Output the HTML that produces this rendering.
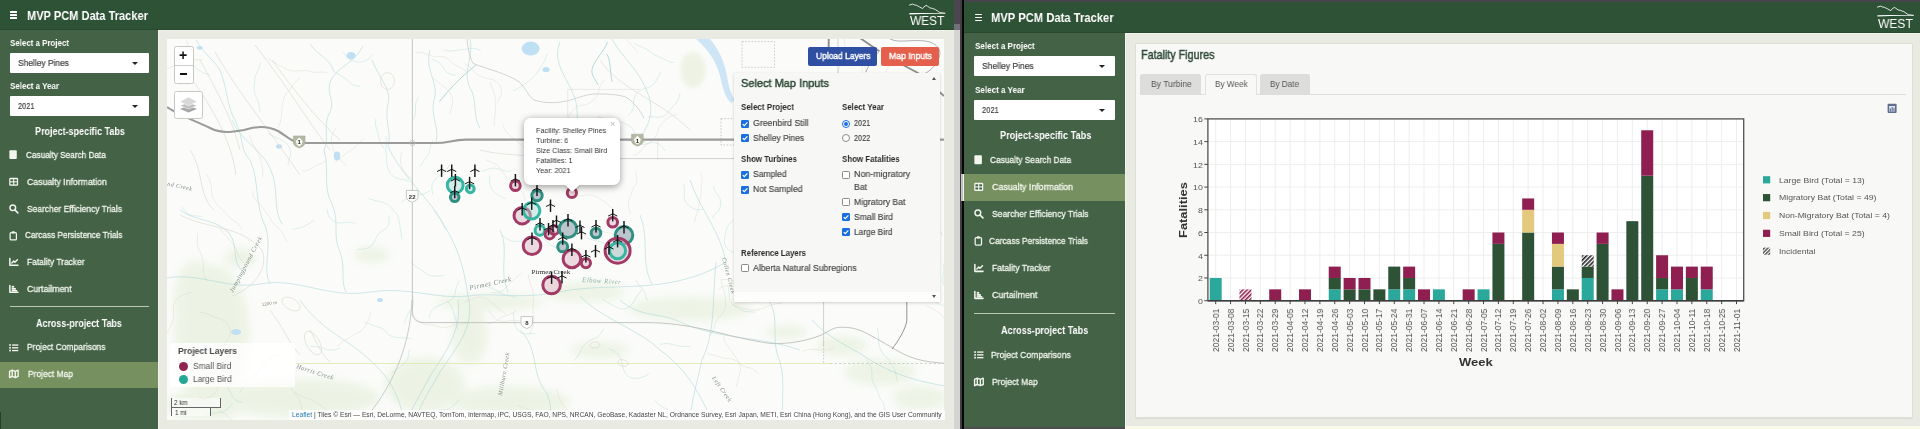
<!DOCTYPE html>
    <html><head><meta charset="utf-8"><title>MVP PCM Data Tracker</title>
    <style>
    html,body{margin:0;padding:0}
    html{overflow:hidden;width:1920px;height:429px}
    body{width:1920px;height:429px;position:relative;overflow:hidden;background:#e9eae1;font-family:"Liberation Sans",sans-serif}
    .t{position:absolute;white-space:nowrap;line-height:1;display:block;transform-origin:0 50%;will-change:transform}
    .b{position:absolute;box-sizing:border-box}
    svg{position:absolute;overflow:visible;will-change:transform}
    </style></head><body>
    <div class="b" style="left:0px;top:0px;width:954px;height:429px;background:#e9eae1;"></div>
<div class="b" style="left:0px;top:30px;width:158px;height:399px;background:#446246;"></div>
<div class="b" style="left:0px;top:0px;width:954px;height:30px;background:#2e5235;"></div>
<div class="b" style="left:0px;top:412px;width:1.2px;height:17px;background:#23402a;"></div>
<div class="b" style="left:158px;top:30px;width:796px;height:1px;background:#f1f3ec;"></div>
<div class="b" style="left:158px;top:30px;width:1px;height:399px;background:#f1f3ec;"></div>
<div class="b" style="left:0px;top:28.6px;width:954px;height:1.4px;background:#29492f;"></div>
<div class="b" style="left:10.0px;top:11.2px;width:7.4px;height:1.5px;background:#fff;border-radius:.5px;"></div>
<div class="b" style="left:10.0px;top:14.1px;width:7.4px;height:1.5px;background:#fff;border-radius:.5px;"></div>
<div class="b" style="left:10.0px;top:17.0px;width:7.4px;height:1.5px;background:#fff;border-radius:.5px;"></div>
<span class="t" style="left:26.50px;top:9px;font-size:13.4px;color:#fff;transform:scaleX(0.8261);font-weight:700;">MVP PCM Data Tracker</span>
<span class="t" style="left:10.00px;top:38px;font-size:9.8px;color:#fff;transform:scaleX(0.8083);font-weight:700;">Select a Project</span>
<div class="b" style="left:10.0px;top:53.0px;width:139.0px;height:20.0px;background:#fff;border-radius:1px;"></div>
<span class="t" style="left:17.60px;top:59px;font-size:9.2px;color:#3c3c3c;transform:scaleX(0.9149);-webkit-text-stroke:0.2px #3c3c3c;">Shelley Pines</span>
<span class="t" style="left:10.00px;top:81px;font-size:9.8px;color:#fff;transform:scaleX(0.8125);font-weight:700;">Select a Year</span>
<div class="b" style="left:10.0px;top:96.0px;width:139.0px;height:20.0px;background:#fff;border-radius:1px;"></div>
<span class="t" style="left:17.60px;top:102px;font-size:9.2px;color:#3c3c3c;transform:scaleX(0.8062);-webkit-text-stroke:0.2px #3c3c3c;">2021</span>
<div class="b" style="left:132.30px;top:61.80px;width:0;height:0;border-left:3.00px solid transparent;border-right:3.00px solid transparent;border-top:3.20px solid #222"></div>
<div class="b" style="left:132.30px;top:104.80px;width:0;height:0;border-left:3.00px solid transparent;border-right:3.00px solid transparent;border-top:3.20px solid #222"></div>
<span class="t" style="left:34.70px;top:126px;font-size:10.7px;color:#fff;transform:scaleX(0.8424);font-weight:700;">Project-specific Tabs</span>
<div class="b" style="left:0px;top:361.6px;width:158px;height:26.8px;background:#76915f;"></div>
<span class="t" style="left:25.70px;top:150px;font-size:9.4px;color:#f2f6ee;transform:scaleX(0.8749);-webkit-text-stroke:0.3px #f2f6ee;">Casualty Search Data</span>
<svg style="left:9.10px;top:150.35px" width="9.50" height="9.50" viewBox="0 0 10 10"><rect x="0.4" y="0.3" width="7.8" height="9.2" rx="1" fill="#f2f6ee"/></svg>
<span class="t" style="left:26.80px;top:177px;font-size:9.4px;color:#f2f6ee;transform:scaleX(0.9280);-webkit-text-stroke:0.3px #f2f6ee;">Casualty Information</span>
<svg style="left:9.10px;top:177.25px" width="9.50" height="9.50" viewBox="0 0 10 10"><rect x="0.2" y="0.9" width="9.4" height="8.4" rx="1.3" fill="#f2f6ee"/><rect x="1.5" y="2.4" width="2.8" height="2.1" fill="#446246"/><rect x="5.5" y="2.4" width="2.8" height="2.1" fill="#446246"/><rect x="1.5" y="5.7" width="2.8" height="2.1" fill="#446246"/><rect x="5.5" y="5.7" width="2.8" height="2.1" fill="#446246"/></svg>
<span class="t" style="left:26.80px;top:204px;font-size:9.4px;color:#f2f6ee;transform:scaleX(0.8991);-webkit-text-stroke:0.3px #f2f6ee;">Searcher Efficiency Trials</span>
<svg style="left:9.10px;top:203.85px" width="9.50" height="9.50" viewBox="0 0 10 10"><circle cx="4" cy="4" r="3" fill="none" stroke="#f2f6ee" stroke-width="1.5"/><path d="M6.2 6.2 L9.3 9.3" stroke="#f2f6ee" stroke-width="1.7" stroke-linecap="round"/></svg>
<span class="t" style="left:24.60px;top:230px;font-size:9.4px;color:#f2f6ee;transform:scaleX(0.8771);-webkit-text-stroke:0.3px #f2f6ee;">Carcass Persistence Trials</span>
<svg style="left:9.10px;top:230.55px" width="9.50" height="9.50" viewBox="0 0 10 10"><rect x="1.2" y="1.8" width="6.6" height="7.6" rx="1" fill="none" stroke="#f2f6ee" stroke-width="1.3"/><rect x="3" y="0.3" width="3" height="2.2" rx=".6" fill="#f2f6ee"/></svg>
<span class="t" style="left:26.80px;top:257px;font-size:9.4px;color:#f2f6ee;transform:scaleX(0.8980);-webkit-text-stroke:0.3px #f2f6ee;">Fatality Tracker</span>
<svg style="left:9.10px;top:257.15px" width="9.50" height="9.50" viewBox="0 0 10 10"><path d="M0.9 1.6 V8.7 H9.4" fill="none" stroke="#f2f6ee" stroke-width="1.6" stroke-linecap="round" stroke-linejoin="round"/><path d="M3 6.2 L4.9 4.2 L6.2 5.4 L8.8 2.8" fill="none" stroke="#f2f6ee" stroke-width="1.5" stroke-linecap="round" stroke-linejoin="round"/></svg>
<span class="t" style="left:26.80px;top:284px;font-size:9.4px;color:#f2f6ee;transform:scaleX(0.9321);-webkit-text-stroke:0.3px #f2f6ee;">Curtailment</span>
<svg style="left:9.10px;top:283.85px" width="9.50" height="9.50" viewBox="0 0 10 10"><path d="M0.9 1.6 V8.7 H9.4" fill="none" stroke="#f2f6ee" stroke-width="1.6" stroke-linecap="round" stroke-linejoin="round"/><rect x="2.8" y="2" width="2.6" height="1.9" fill="#f2f6ee"/><rect x="2.8" y="4.2" width="4.4" height="1.9" fill="#f2f6ee"/><rect x="2.8" y="6.3" width="5.8" height="1.6" fill="#f2f6ee"/></svg>
<span class="t" style="left:26.70px;top:342px;font-size:9.4px;color:#f2f6ee;transform:scaleX(0.9020);-webkit-text-stroke:0.3px #f2f6ee;">Project Comparisons</span>
<svg style="left:9.10px;top:342.55px" width="9.50" height="9.50" viewBox="0 0 10 10"><rect x="0.2" y="1.3" width="1.8" height="1.7" fill="#f2f6ee"/><rect x="3.2" y="1.45" width="6.6" height="1.4" fill="#f2f6ee"/><rect x="0.2" y="4.2" width="1.8" height="1.7" fill="#f2f6ee"/><rect x="3.2" y="4.3500000000000005" width="6.6" height="1.4" fill="#f2f6ee"/><rect x="0.2" y="7.1" width="1.8" height="1.7" fill="#f2f6ee"/><rect x="3.2" y="7.25" width="6.6" height="1.4" fill="#f2f6ee"/></svg>
<span class="t" style="left:27.70px;top:369px;font-size:9.4px;color:#f2f6ee;transform:scaleX(0.9012);-webkit-text-stroke:0.3px #f2f6ee;">Project Map</span>
<svg style="left:9.10px;top:369.45px" width="9.50" height="9.50" viewBox="0 0 10 10"><path d="M0.6 2.4 L3.4 1.2 L6.6 2.4 L9.6 1.2 V7.8 L6.6 9 L3.4 7.8 L0.6 9 Z M3.4 1.2 V7.8 M6.6 2.4 V9" fill="none" stroke="#f2f6ee" stroke-width="1.45" stroke-linejoin="round"/></svg>
<div class="b" style="left:10.0px;top:305.8px;width:139.0px;height:1px;background:#b9c8b0;"></div>
<span class="t" style="left:36.40px;top:318px;font-size:10.7px;color:#fff;transform:scaleX(0.8376);font-weight:700;">Across-project Tabs</span>
<svg style="left:908.6px;top:3.0px" width="37.00" height="23.00" viewBox="0 0 37 23"><path d="M0.5 2.1 L3.3 1.1 L5.4 1.9 L7.5 2.3 L10.7 4 L13.6 5.6 L14.6 4.2 L17 2.4 L18.6 3.2 L20.7 4.8 L23.4 5.4 L26.5 6.6 L30.7 9.5 L36 10.2" fill="none" stroke="#fff" stroke-width="0.85" stroke-linejoin="round" stroke-linecap="round"/><path d="M0.4 10.1 L13 9.9 L36 10 L36 10.5 L13 10.9 L0.4 11.4 Z" fill="#fff"/></svg>
<span class="t" style="left:909.70px;top:15px;font-size:12.3px;color:#fff;transform:scaleX(0.9653);">WEST</span>
<svg style="left:167px;top:39px;overflow:hidden" width="777" height="381" viewBox="167 39 777 381"><defs><filter id="bl" x="-20%" y="-20%" width="140%" height="140%"><feGaussianBlur stdDeviation="5"/></filter><filter id="bl2" x="-20%" y="-20%" width="140%" height="140%"><feGaussianBlur stdDeviation="2"/></filter><symbol id="tb" viewBox="-5 -5 10 14" overflow="visible"><path d="M0 -4.8 V7.6" stroke="#161616" stroke-width="1.45"/><path d="M0 0 L-4.2 2.1 M0 0 L4.2 2.1" stroke="#161616" stroke-width="1.0" stroke-linecap="round"/></symbol></defs><rect x="167" y="39" width="777" height="381" fill="#fbfcfa"/><g filter="url(#bl)" fill="#dfead0" opacity=".5"><ellipse cx="212" cy="335" rx="38" ry="70"/><ellipse cx="196" cy="300" rx="22" ry="40"/><ellipse cx="240" cy="258" rx="16" ry="10"/><ellipse cx="300" cy="398" rx="80" ry="20"/><ellipse cx="205" cy="405" rx="40" ry="16"/><ellipse cx="425" cy="385" rx="40" ry="28"/><ellipse cx="470" cy="335" rx="18" ry="30"/><ellipse cx="510" cy="402" rx="60" ry="16"/><ellipse cx="842" cy="346" rx="26" ry="10"/><ellipse cx="880" cy="372" rx="36" ry="13"/><ellipse cx="920" cy="398" rx="28" ry="12"/><ellipse cx="690" cy="309" rx="62" ry="12"/><ellipse cx="490" cy="302" rx="55" ry="8"/><ellipse cx="585" cy="292" rx="40" ry="10"/><ellipse cx="786" cy="332" rx="22" ry="7"/><ellipse cx="372" cy="255" rx="18" ry="8"/><ellipse cx="600" cy="350" rx="30" ry="8"/></g><path d="M695 38 L709 38 C718 48 724 60 727 76 C729 88 731 94 735 100 L731 103 C726 98 723 90 721 80 C718 64 709 50 695 38 Z" fill="#cde5f4"/><ellipse cx="693" cy="70" rx="13" ry="18" fill="#e4edd8" opacity=".6" filter="url(#bl2)"/><path d="M467 39 C468 50 470 58 473 63.4 C490 70 508 74 518.8 81.7 C526 88 528 96 534 100 C546 104 560 103 570.7 100 C580 97 588 94 595 94 C606 94 616 94 625.7 97 C634 102 640 110 644 118.4" fill="none" stroke="#c6cac6" stroke-width=".8"/><path d="M607.4 42 C604 52 594 60 592 69.5 C591 76 596 80 598 84.8 M607 54 C611 62 610 72 612 81.7 M476 65 C462 76 450 88 439.5 101.6" fill="none" stroke="#9fd0d2" stroke-width=".8"/><path d="M567.7 117 V89.4 H640 M657.7 139.6 V159.6" fill="none" stroke="#e2e2e0" stroke-width=".7"/><path d="M296 363.5 H830" stroke="#e3ebb8" stroke-width="1.1"/><path d="M830 363.5 H945" stroke="#c9cfc0" stroke-width=".9" stroke-dasharray="2.5 2"/><path d="M196 40 C205 55 214 60 220 70 C228 90 226 105 236 122 C244 140 240 150 250 160" fill="none" stroke="#a9d6da" stroke-width="0.75" opacity=".75"/><path d="M363 46 C355 62 340 66 332 78 C324 92 336 100 330 112 C322 126 330 138 324 150" fill="none" stroke="#a9d6da" stroke-width="0.75" opacity=".75"/><path d="M310 44 C318 56 330 58 334 72" fill="none" stroke="#a9d6da" stroke-width="0.75" opacity=".75"/><path d="M372 60 C380 80 392 90 388 104 C384 120 392 132 388 146" fill="none" stroke="#a9d6da" stroke-width="0.75" opacity=".75"/><path d="M470 39 C474 58 462 70 470 88 C478 100 472 116 480 128" fill="none" stroke="#a9d6da" stroke-width="0.75" opacity=".75"/><path d="M430 50 C424 70 440 84 434 100 C430 116 440 128 436 142" fill="none" stroke="#a9d6da" stroke-width="0.75" opacity=".75"/><path d="M560 42 C552 62 566 76 574 96 C580 110 574 122 582 138" fill="none" stroke="#a9d6da" stroke-width="0.75" opacity=".75"/><path d="M612 39 C622 58 640 70 648 94 C654 110 650 124 640 138" fill="none" stroke="#a9d6da" stroke-width="0.75" opacity=".75"/><path d="M324 150 C330 170 322 186 332 204 C340 222 332 236 340 252 C346 268 340 280 346 292" fill="none" stroke="#a9d6da" stroke-width="0.75" opacity=".75"/><path d="M250 160 C260 182 254 204 266 228 C272 250 262 268 270 284" fill="none" stroke="#a9d6da" stroke-width="0.75" opacity=".75"/><path d="M167 278 C198 272 228 290 260 284 C298 277 328 299 370 292 C408 286 438 300 468 296 C498 292 518 300 558 292 C598 284 640 290 678 281 C700 276 716 268 726 262" fill="none" stroke="#a9d6da" stroke-width="0.75" opacity=".75"/><path d="M388 146 C398 170 420 190 436 212 C448 232 462 250 468 296" fill="none" stroke="#a9d6da" stroke-width="0.75" opacity=".75"/><path d="M468 296 C476 326 456 348 440 372 C428 394 420 404 416 420" fill="none" stroke="#a9d6da" stroke-width="0.75" opacity=".75"/><path d="M458 300 C462 330 446 352 430 376 C420 396 412 406 408 420" fill="none" stroke="#a9d6da" stroke-width="0.75" opacity=".75"/><path d="M580 296 C600 318 640 330 660 350 C690 372 700 396 712 420" fill="none" stroke="#a9d6da" stroke-width="0.75" opacity=".75"/><path d="M716 262 C712 300 716 330 702 360 C696 386 692 400 690 420" fill="none" stroke="#a9d6da" stroke-width="0.75" opacity=".75"/><path d="M690 180 C700 210 720 230 726 262" fill="none" stroke="#a9d6da" stroke-width="0.75" opacity=".75"/><path d="M812 320 C830 340 850 346 870 360 C890 372 910 380 945 386" fill="none" stroke="#a9d6da" stroke-width="0.75" opacity=".75"/><path d="M180 210 C196 222 214 218 228 232 C240 246 230 262 244 272" fill="none" stroke="#a9d6da" stroke-width="0.75" opacity=".75"/><path d="M500 230 C510 250 498 270 508 292" fill="none" stroke="#a9d6da" stroke-width="0.75" opacity=".75"/><path d="M640 215 C650 240 640 262 652 284" fill="none" stroke="#a9d6da" stroke-width="0.75" opacity=".75"/><path d="M300 300 C320 330 350 340 372 362 C392 380 400 400 404 420" fill="none" stroke="#a9d6da" stroke-width="0.75" opacity=".75"/><path d="M620 300 C640 318 660 312 680 322 C720 340 760 336 800 350" fill="none" stroke="#a9d6da" stroke-width="0.75" opacity=".75"/><path d="M770 302 C780 320 770 340 780 362 C786 384 780 400 784 420" fill="none" stroke="#a9d6da" stroke-width="0.75" opacity=".75"/><path d="M520 330 C540 350 530 372 546 392 C552 404 550 412 552 420" fill="none" stroke="#a9d6da" stroke-width="0.75" opacity=".75"/><path d="M232 120 C240 140 262 150 270 168 C280 190 272 208 282 224" fill="none" stroke="#a9d6da" stroke-width="0.75" opacity=".75"/><path d="M418.6 96.5 Q415.2 102.6 415.4 106.1 Q415.6 109.6 415.4 113.1 Q415.2 116.6 413.1 119.4 M333.8 71.7 Q339.8 75.4 343.0 76.9 Q346.1 78.4 348.3 81.1 Q350.5 83.9 353.7 85.1 Q357.0 86.4 360.5 86.3 M654.5 400.1 Q659.2 405.3 662.3 406.8 Q665.5 408.3 668.5 410.1 Q671.5 411.8 675.0 411.9 Q678.5 411.9 682.0 411.6 Q685.5 411.3 689.0 411.1 Q692.5 411.0 696.0 411.2 M602.3 298.8 Q608.0 302.9 611.2 304.4 Q614.3 305.9 617.4 307.6 Q620.4 309.3 623.9 309.0 Q627.4 308.6 630.0 306.3 Q632.7 304.0 634.2 300.8 Q635.7 297.7 637.9 295.0 Q640.1 292.3 642.1 289.4 M411.1 262.1 Q415.7 267.3 419.0 268.7 Q422.2 270.0 424.7 272.5 Q427.1 275.0 430.6 275.7 Q434.0 276.4 437.5 276.1 Q441.0 275.9 444.5 275.6 M433.9 210.0 Q437.6 215.9 439.8 218.6 Q442.0 221.4 443.1 224.7 Q444.2 228.0 446.8 230.4 M546.9 53.9 Q545.5 60.8 543.2 63.4 Q540.9 66.0 539.3 69.2 Q537.7 72.3 535.4 74.9 Q533.0 77.4 530.3 79.7 Q527.6 82.0 524.7 83.9 Q521.8 85.8 519.0 87.9 Q516.2 90.1 512.8 90.7 M901.0 219.6 Q898.2 226.0 897.7 229.5 Q897.2 233.0 896.3 236.3 Q895.4 239.7 893.7 242.8 M513.3 312.0 Q513.9 319.0 514.4 322.5 Q514.9 325.9 516.9 328.8 Q518.8 331.7 522.0 333.1 Q525.2 334.6 528.7 333.9 Q532.1 333.3 535.5 333.9 M267.5 133.3 Q273.7 136.5 277.0 137.9 Q280.2 139.3 283.3 140.9 Q286.4 142.4 288.3 145.4 Q290.1 148.4 290.6 151.8 Q291.0 155.3 289.6 158.5 Q288.3 161.8 288.0 165.3 M489.7 175.7 Q489.1 182.7 490.3 185.9 Q491.6 189.2 494.0 191.8 Q496.3 194.4 499.5 195.9 Q502.6 197.4 505.8 198.9 M624.7 139.1 Q631.5 140.9 634.7 142.3 Q637.9 143.7 641.4 144.2 Q644.8 144.8 648.1 143.5 Q651.4 142.3 654.8 142.7 Q658.3 143.2 660.8 145.6 Q663.4 148.1 665.3 151.0 M741.8 213.0 Q736.1 217.0 733.5 219.4 Q731.0 221.8 728.8 224.5 Q726.6 227.3 726.2 230.8 Q725.8 234.2 724.8 237.6 Q723.7 240.9 724.8 244.3 Q725.9 247.6 728.7 249.7 Q731.4 251.9 734.8 252.7 Q738.2 253.6 741.6 252.8 M431.2 59.0 Q438.0 60.8 440.2 63.5 Q442.5 66.2 444.2 69.2 Q446.0 72.2 449.2 73.7 Q452.3 75.2 455.8 75.3 M459.3 280.7 Q455.7 286.7 455.7 290.2 Q455.6 293.7 454.0 296.8 Q452.3 299.8 449.0 301.1 Q445.8 302.4 442.6 303.9 Q439.4 305.3 436.2 306.9 Q433.1 308.4 431.3 311.4 Q429.5 314.4 429.5 317.9 M433.2 139.9 Q430.0 146.1 429.8 149.6 Q429.6 153.1 427.3 155.8 Q425.1 158.5 423.4 161.5 Q421.7 164.6 419.3 167.1 M877.3 327.9 Q878.7 334.7 878.5 338.2 Q878.2 341.7 879.2 345.1 Q880.1 348.4 881.6 351.6 Q883.2 354.7 885.9 356.9 Q888.7 359.0 890.5 362.0 Q892.3 365.0 894.0 368.1 Q895.6 371.2 896.0 374.6 Q896.3 378.1 897.5 381.4 M340.3 348.2 Q333.7 350.6 330.2 350.2 Q326.8 349.9 323.6 348.4 Q320.4 346.9 316.9 346.7 Q313.4 346.5 309.9 346.3 M443.3 50.0 Q450.1 51.6 453.5 50.9 Q457.0 50.2 460.4 49.9 Q463.9 49.7 467.3 48.8 Q470.7 47.8 474.1 48.4 Q477.6 48.9 480.7 50.5 M438.6 410.3 Q445.6 410.3 448.8 408.8 Q451.9 407.3 454.3 404.7 Q456.6 402.1 459.3 399.9 M866.5 359.2 Q870.1 365.2 871.3 368.5 Q872.4 371.8 871.9 375.3 Q871.5 378.8 872.8 382.0 Q874.2 385.2 876.0 388.2 Q877.9 391.2 878.7 394.6 Q879.6 398.0 881.8 400.7 Q884.0 403.4 884.5 406.9 Q885.0 410.3 885.7 413.8 M661.0 72.1 Q657.3 78.0 655.9 81.1 Q654.4 84.3 651.4 86.1 Q648.3 87.8 644.9 88.5 Q641.5 89.2 638.7 91.4 Q636.0 93.5 634.7 96.8 Q633.3 100.0 633.7 103.5 Q634.1 107.0 632.5 110.1 Q631.0 113.3 628.2 115.5 M280.6 353.9 Q273.7 355.1 270.9 357.2 Q268.1 359.4 265.2 361.3 Q262.3 363.2 261.2 366.6 Q260.1 369.9 257.8 372.5 Q255.4 375.1 252.4 376.8 Q249.4 378.6 247.7 381.7 Q246.1 384.7 243.4 387.1 Q240.8 389.4 239.7 392.7 M933.5 113.2 Q932.1 120.1 932.4 123.6 Q932.7 127.0 934.2 130.2 Q935.8 133.4 936.9 136.7 M368.5 198.6 Q375.2 200.6 378.7 201.4 Q382.1 202.2 385.4 203.3 Q388.7 204.5 390.8 207.3 Q393.0 210.0 395.4 212.5 Q397.9 215.0 398.5 218.5 Q399.2 221.9 399.8 225.3 Q400.5 228.8 401.0 232.3 Q401.5 235.7 401.9 239.2 M181.5 206.7 Q185.4 212.5 188.5 214.2 Q191.5 215.9 195.0 215.9 Q198.5 215.9 202.0 216.4 M260.5 62.5 Q259.1 69.4 257.1 72.3 Q255.1 75.1 254.9 78.6 Q254.7 82.1 254.2 85.6 Q253.7 89.1 254.5 92.5 Q255.2 95.9 257.0 98.9 Q258.7 102.0 259.2 105.4 Q259.7 108.9 260.2 112.3 M603.5 328.6 Q600.8 335.0 597.7 336.8 Q594.7 338.5 591.4 339.7 Q588.2 341.0 585.7 343.5 Q583.2 345.9 581.6 349.1 Q580.0 352.2 578.4 355.3 Q576.8 358.4 574.0 360.5 M561.5 133.4 Q559.0 139.9 556.2 142.0 Q553.4 144.1 551.7 147.2 Q550.0 150.2 548.5 153.4 Q547.1 156.6 546.0 159.9 Q544.9 163.2 544.3 166.7 M412.5 294.7 Q413.8 301.6 413.1 305.0 Q412.4 308.4 410.0 311.0 Q407.6 313.5 406.6 316.9 Q405.7 320.2 403.7 323.2 M680.0 93.5 Q678.8 100.4 676.2 102.8 Q673.7 105.2 671.5 107.9 Q669.3 110.7 667.2 113.4 Q665.1 116.2 661.7 117.0 Q658.3 117.8 654.9 117.0 Q651.5 116.2 648.1 117.1 M502.3 235.4 Q507.4 240.2 510.9 240.8 Q514.3 241.4 517.8 241.4 Q521.3 241.3 524.7 240.5 Q528.1 239.6 531.5 238.6 M713.3 185.4 Q714.8 192.3 717.4 194.6 Q720.0 197.0 720.5 200.5 Q721.0 203.9 720.1 207.3 Q719.2 210.7 716.4 212.8 Q713.7 215.0 712.4 218.2 M373.3 54.1 Q368.8 59.4 365.6 60.9 Q362.4 62.3 359.0 62.1 Q355.5 61.8 352.1 60.7 Q348.8 59.7 346.7 56.8 Q344.7 54.0 342.2 51.5 M583.9 235.1 Q589.2 239.7 592.7 240.0 Q596.2 240.4 599.5 241.6 Q602.8 242.8 606.1 243.7 Q609.5 244.6 612.8 243.4 Q616.1 242.2 619.5 243.1 M660.0 344.4 Q666.8 342.9 670.1 343.9 Q673.5 344.8 676.9 345.6 Q680.3 346.4 683.8 346.4 Q687.3 346.3 690.8 346.6 M887.0 141.1 Q892.0 146.0 892.6 149.4 Q893.3 152.9 891.7 156.0 Q890.0 159.1 889.5 162.5 Q889.0 166.0 890.1 169.3 Q891.1 172.7 890.1 176.0 Q889.0 179.4 887.4 182.5 Q885.8 185.6 884.0 188.6 M327.0 208.8 Q327.7 215.8 330.2 218.3 Q332.6 220.7 335.8 222.2 Q339.0 223.7 342.4 222.9 Q345.8 222.1 349.3 222.4 Q352.7 222.7 356.2 223.3 M314.2 219.9 Q308.7 224.2 305.5 225.7 Q302.4 227.3 299.0 228.1 Q295.6 228.9 292.1 229.5 M857.5 408.7 Q857.7 415.7 858.5 419.1 Q859.3 422.5 858.5 425.9 Q857.7 429.3 856.0 432.4 Q854.3 435.4 852.0 438.1 M481.5 171.4 Q488.0 168.9 491.4 168.3 Q494.9 167.7 498.2 168.9 Q501.5 170.0 504.9 170.9 Q508.2 171.8 511.5 170.5 M683.9 184.1 Q684.7 191.1 684.2 194.5 Q683.7 198.0 685.3 201.1 Q686.9 204.2 689.7 206.3 Q692.5 208.4 695.9 209.5 Q699.2 210.6 702.4 209.3 M449.9 164.3 Q447.0 170.7 443.9 172.3 Q440.8 173.9 438.2 176.3 Q435.6 178.7 433.6 181.5 Q431.5 184.3 431.8 187.8 Q432.1 191.3 432.9 194.7 M535.8 230.6 Q539.4 236.6 542.6 238.1 Q545.7 239.6 547.9 242.4 Q550.0 245.1 553.3 246.5 Q556.5 247.9 559.5 249.6 Q562.6 251.3 565.8 252.6 Q569.1 253.9 572.6 254.2 Q576.0 254.6 579.4 255.5 M232.6 403.9 Q228.0 409.1 225.0 410.9 Q222.0 412.7 218.5 412.7 Q215.0 412.8 211.5 413.4 Q208.1 413.9 204.9 415.3 M932.1 95.9 Q934.0 102.7 933.4 106.1 Q932.8 109.6 931.2 112.7 Q929.5 115.8 927.9 118.8 Q926.2 121.9 924.8 125.1 Q923.5 128.4 921.3 131.1 Q919.1 133.8 916.8 136.5 Q914.6 139.2 911.3 140.3 Q907.9 141.3 904.4 141.2 M608.7 348.7 Q615.3 351.1 617.4 353.9 Q619.6 356.6 621.0 359.8 Q622.4 363.0 622.9 366.5 Q623.4 370.0 625.1 373.0 Q626.9 376.1 630.1 377.4 Q633.3 378.8 636.8 378.3 Q640.3 377.9 643.6 376.8 Q646.9 375.8 649.2 373.1 M816.4 251.8 Q816.1 258.8 817.1 262.1 Q818.1 265.5 820.2 268.3 Q822.3 271.1 824.5 273.8 Q826.8 276.5 830.1 277.4 Q833.5 278.4 835.7 281.1 Q838.0 283.8 838.4 287.3 Q838.9 290.7 841.2 293.4 Q843.4 296.1 845.6 298.8 M746.4 219.5 Q746.2 226.5 744.8 229.8 Q743.5 233.0 743.4 236.5 Q743.3 240.0 742.5 243.4 Q741.7 246.8 741.1 250.3 Q740.5 253.7 738.4 256.5 M226.6 385.9 Q230.4 391.8 231.7 395.0 Q233.0 398.3 235.9 400.3 Q238.8 402.3 242.2 402.6 M364.3 322.2 Q370.9 324.6 374.2 325.7 Q377.5 326.9 380.8 328.0 Q384.2 329.0 386.1 331.9 Q388.1 334.8 391.3 336.2 Q394.5 337.6 398.0 337.7 Q401.5 337.8 405.0 337.8 Q408.5 337.8 411.8 338.8 M388.9 216.5 Q389.6 223.5 387.7 226.4 Q385.8 229.4 382.6 230.7 Q379.4 232.1 377.7 235.1 Q376.0 238.2 374.5 241.4 Q373.0 244.5 370.3 246.7 Q367.6 248.9 364.1 249.0 Q360.6 249.1 357.1 249.4 M375.7 118.9 Q375.0 125.9 376.5 129.0 Q378.1 132.2 378.5 135.7 Q378.8 139.1 380.4 142.3 Q381.9 145.4 384.0 148.2 M635.8 279.7 Q639.0 285.9 641.6 288.2 Q644.2 290.5 645.2 293.9 Q646.2 297.2 647.3 300.6 M186.3 40.4 Q189.2 46.8 189.5 50.2 Q189.9 53.7 190.6 57.1 Q191.4 60.5 192.8 63.8 Q194.1 67.0 196.9 69.1 Q199.7 71.2 202.9 72.6 Q206.1 74.0 209.6 74.6 M429.8 190.7 Q424.0 194.5 420.5 194.6 Q417.0 194.6 413.6 195.7 Q410.3 196.8 407.2 198.4 Q404.1 200.0 401.3 202.1 M943.1 263.5 Q944.6 270.3 943.6 273.7 Q942.7 277.0 942.8 280.5 Q942.9 284.0 945.0 286.8 Q947.2 289.6 948.6 292.8 Q950.1 295.9 950.9 299.3 Q951.8 302.7 954.1 305.3 M921.5 205.2 Q923.4 211.9 924.7 215.2 Q926.0 218.4 929.0 220.2 Q932.0 222.0 934.2 224.7 Q936.4 227.5 938.9 229.9 Q941.5 232.3 942.4 235.7 M597.6 116.5 Q604.4 118.3 607.6 119.7 Q610.8 121.1 614.3 120.7 Q617.7 120.4 620.9 121.9 Q624.1 123.3 627.3 124.7 Q630.5 126.1 632.5 129.0 Q634.4 131.9 636.2 134.9 Q637.9 138.0 640.8 139.9 Q643.7 141.9 646.9 143.4 M385.9 136.4 Q386.5 143.4 386.0 146.9 Q385.5 150.3 386.0 153.8 Q386.5 157.3 386.7 160.8 Q386.9 164.3 387.7 167.7 Q388.4 171.1 390.6 173.8 Q392.8 176.6 396.0 178.0 Q399.2 179.4 402.7 179.5 Q406.2 179.5 409.1 181.5 M553.2 122.8 Q549.7 128.9 547.8 131.8 Q545.9 134.7 545.1 138.1 Q544.3 141.5 545.0 145.0 Q545.8 148.4 546.3 151.8 Q546.9 155.3 548.2 158.5 Q549.6 161.7 551.5 164.7 M795.9 116.0 Q802.8 116.6 806.0 118.0 Q809.2 119.5 812.7 119.5 Q816.2 119.6 819.6 118.5 Q822.9 117.5 826.4 117.7 Q829.9 117.8 833.4 118.0 Q836.9 118.2 840.4 118.7 M446.8 300.7 Q451.7 305.6 452.5 309.1 Q453.3 312.5 454.6 315.7 Q455.9 319.0 456.5 322.4 Q457.1 325.9 458.1 329.2 M409.4 349.3 Q408.7 356.2 407.4 359.5 Q406.0 362.7 403.2 364.7 Q400.3 366.7 397.5 368.9 Q394.8 371.0 391.7 372.8 M167.1 188.2 Q160.7 190.9 157.3 190.0 Q153.9 189.2 150.4 189.5 Q147.0 189.8 144.2 191.9 Q141.4 194.0 139.9 197.2 Q138.4 200.3 136.8 203.5 Q135.2 206.6 132.8 209.2 Q130.5 211.8 127.1 212.6 M727.8 285.6 Q729.7 292.4 729.2 295.9 Q728.8 299.3 730.7 302.3 Q732.7 305.2 735.8 306.8 Q738.9 308.3 741.9 310.2 Q744.8 312.1 748.3 311.8 Q751.8 311.5 755.2 312.3 M914.8 277.7 Q914.3 284.7 915.9 287.8 Q917.5 290.9 920.6 292.6 Q923.7 294.2 926.7 296.0 Q929.7 297.8 932.5 299.9 Q935.3 302.0 938.4 303.6 Q941.5 305.3 945.0 305.6 M634.0 43.0 Q640.0 46.7 643.3 47.7 Q646.7 48.7 649.2 51.1 Q651.7 53.6 654.9 55.0 Q658.1 56.4 661.3 57.9 Q664.4 59.4 667.5 61.1 Q670.5 62.9 674.0 62.3 M487.0 286.5 Q493.6 288.7 496.6 290.6 Q499.5 292.5 502.7 294.0 Q505.8 295.5 509.3 295.9 Q512.8 296.3 516.1 297.5 M885.8 125.4 Q891.7 129.2 894.9 130.6 Q898.2 131.9 901.6 132.7 Q905.0 133.6 908.1 132.1 Q911.3 130.5 913.9 128.2 Q916.5 125.8 919.8 124.9" fill="none" stroke="#a8d8d6" stroke-width=".7" opacity=".55"/><path d="M219.4 227.9 Q222.7 232.9 225.0 234.8 Q227.2 236.8 228.9 239.3 Q230.6 241.7 232.8 243.8 Q234.9 245.9 236.0 248.7 Q237.0 251.5 238.1 254.3 Q239.1 257.2 241.0 259.5 Q242.8 261.9 245.3 263.6 M491.0 292.5 Q497.0 293.1 499.8 292.0 Q502.6 291.0 504.7 288.8 Q506.7 286.6 509.0 284.6 Q511.2 282.6 513.2 280.4 Q515.3 278.2 517.8 276.5 Q520.2 274.8 522.1 272.5 M516.4 310.3 Q511.7 314.0 508.8 314.7 Q505.8 315.4 503.1 316.6 Q500.3 317.8 498.1 319.8 Q495.8 321.8 493.0 322.7 Q490.1 323.5 487.1 323.6 M191.8 292.1 Q186.0 293.8 183.2 294.8 Q180.3 295.8 178.1 297.8 Q175.9 299.8 174.6 302.5 Q173.4 305.2 173.4 308.2 Q173.4 311.2 173.6 314.2 Q173.9 317.2 173.0 320.1 Q172.0 322.9 171.0 325.7 Q169.9 328.5 168.1 331.0 Q166.4 333.4 164.9 336.0 M764.3 156.6 Q763.6 150.7 763.2 147.7 Q762.8 144.7 762.0 141.8 Q761.2 138.9 761.6 136.0 Q762.1 133.0 761.6 130.0 Q761.2 127.1 760.3 124.2 M864.0 50.5 Q860.8 55.7 860.6 58.6 Q860.3 61.6 861.4 64.4 Q862.4 67.3 862.2 70.3 Q862.0 73.2 862.5 76.2 Q863.0 79.2 862.8 82.1 Q862.6 85.1 861.3 87.8 Q859.9 90.5 859.0 93.3 Q858.1 96.2 857.8 99.2 Q857.6 102.2 856.0 104.8 Q854.5 107.3 852.7 109.7 M370.7 312.0 Q369.4 317.9 368.2 320.6 Q366.9 323.3 365.4 325.9 Q363.9 328.5 361.6 330.5 Q359.4 332.5 356.5 333.4 Q353.7 334.2 351.4 336.2 Q349.1 338.2 346.4 339.4 Q343.6 340.5 341.5 342.6 Q339.4 344.8 336.9 346.4 M528.9 334.8 Q532.1 329.7 532.7 326.8 Q533.2 323.8 533.8 320.9 Q534.4 317.9 533.5 315.1 Q532.6 312.2 533.0 309.2 Q533.4 306.3 533.2 303.3 Q533.0 300.3 533.4 297.3 Q533.8 294.3 533.1 291.4 Q532.4 288.5 531.0 285.8 Q529.6 283.2 529.3 280.2 Q528.9 277.2 528.4 274.2 M776.0 266.0 Q770.4 264.0 767.4 263.8 Q764.4 263.6 761.6 264.7 Q758.8 265.7 756.7 267.9 Q754.7 270.2 752.6 272.3 Q750.4 274.4 748.7 276.8 Q746.9 279.2 744.3 280.6 Q741.6 281.9 738.6 282.2 Q735.6 282.5 732.8 281.3 Q730.1 280.1 727.1 279.6 Q724.2 279.1 721.3 279.9 M241.9 228.9 Q238.6 223.9 236.2 222.2 Q233.7 220.4 231.2 218.8 Q228.7 217.1 227.1 214.6 Q225.4 212.1 223.1 210.2 Q220.8 208.2 218.6 206.2 Q216.4 204.2 214.8 201.6 Q213.3 199.0 212.4 196.2 Q211.6 193.3 211.5 190.3 Q211.5 187.3 210.9 184.4 Q210.2 181.4 208.9 178.7 Q207.7 176.0 205.8 173.6 M364.4 138.2 Q359.6 141.8 357.9 144.3 Q356.3 146.8 353.8 148.4 Q351.3 150.1 348.7 151.6 Q346.1 153.1 343.8 155.0 Q341.5 157.0 339.4 159.1 Q337.3 161.3 334.4 162.2 M561.2 127.2 Q565.7 123.2 567.0 120.5 Q568.4 117.8 569.6 115.1 Q570.9 112.4 572.9 110.2 Q575.0 108.0 577.7 106.6 Q580.3 105.2 583.3 105.1 Q586.3 104.9 588.9 103.4 Q591.5 101.9 593.7 99.9 Q596.0 97.9 597.3 95.2 Q598.6 92.5 599.1 89.5 Q599.5 86.6 601.3 84.1 Q603.0 81.7 605.0 79.4 M889.7 180.8 Q894.2 176.8 896.9 175.4 Q899.5 174.1 902.4 173.2 Q905.3 172.3 907.4 170.2 Q909.5 168.0 911.8 166.2 Q914.2 164.3 916.9 163.1 Q919.6 161.8 922.1 160.1 Q924.6 158.4 926.0 155.8 Q927.5 153.1 928.5 150.3 Q929.6 147.5 929.3 144.5 Q928.9 141.5 930.1 138.8 Q931.2 136.0 931.0 133.0 M735.9 387.2 Q737.8 381.5 738.3 378.6 Q738.9 375.6 739.8 372.8 Q740.7 369.9 740.4 366.9 Q740.0 363.9 738.4 361.4 Q736.7 358.9 735.0 356.4 Q733.4 353.9 731.7 351.5 Q729.9 349.0 728.0 346.7 Q726.1 344.4 724.9 341.6 Q723.8 338.9 723.0 336.0 M287.1 242.5 Q284.7 237.0 283.2 234.3 Q281.8 231.7 279.8 229.5 Q277.8 227.2 275.4 225.4 Q273.0 223.6 271.7 220.9 Q270.4 218.2 268.5 215.8 Q266.7 213.4 265.1 210.9 Q263.4 208.4 261.4 206.2 Q259.4 203.9 257.3 201.8 Q255.1 199.8 253.8 197.1 Q252.5 194.4 252.7 191.4 M449.7 114.1 Q451.4 108.4 452.1 105.5 Q452.8 102.6 452.5 99.6 Q452.2 96.6 450.8 94.0 Q449.4 91.3 447.0 89.5 Q444.6 87.6 442.4 85.6 Q440.2 83.5 437.8 81.8 Q435.3 80.1 433.4 77.8 M268.0 58.7 Q273.3 61.5 275.8 63.2 Q278.2 64.9 280.9 66.3 Q283.6 67.7 286.2 69.0 Q288.9 70.4 291.9 70.8 Q294.8 71.2 297.8 70.9 Q300.8 70.7 303.8 70.5 Q306.8 70.3 309.6 71.3 Q312.4 72.4 315.4 72.3 Q318.4 72.1 321.4 72.0 Q324.4 71.9 327.3 72.7 M918.3 114.2 Q920.0 119.9 921.0 122.8 Q921.9 125.6 924.0 127.8 Q926.1 130.0 927.0 132.8 Q928.0 135.6 929.3 138.3 M869.6 275.4 Q873.0 270.4 875.5 268.7 Q877.9 267.0 880.6 265.6 Q883.2 264.2 886.0 263.1 Q888.8 262.0 891.2 260.1 Q893.5 258.2 895.8 256.3 Q898.1 254.4 900.5 252.6 M199.4 396.6 Q204.3 400.0 207.2 401.0 Q210.0 402.1 212.5 403.7 Q215.0 405.4 216.7 407.8 Q218.4 410.3 221.0 411.8 Q223.6 413.3 226.1 414.9 Q228.6 416.6 230.6 418.8 Q232.6 421.0 235.4 422.1 Q238.2 423.2 240.5 425.2 Q242.8 427.1 245.6 428.1 M632.8 248.6 Q629.3 243.7 627.1 241.7 Q624.9 239.6 622.3 238.2 Q619.7 236.7 616.9 235.6 Q614.1 234.4 611.2 233.6 Q608.3 232.9 605.4 232.1 Q602.5 231.3 599.5 231.5 Q596.6 231.7 594.0 233.2 Q591.5 234.8 588.5 235.0 M528.5 209.2 Q525.7 203.9 525.1 201.0 Q524.6 198.0 523.8 195.2 Q522.9 192.3 521.0 190.0 Q519.0 187.7 516.8 185.8 Q514.5 183.8 512.0 182.2 Q509.5 180.5 507.6 178.2 Q505.7 175.9 503.8 173.5 Q501.9 171.2 500.4 168.6 Q498.9 166.0 496.4 164.4 Q493.9 162.7 491.0 162.1 Q488.0 161.4 485.6 159.6 M410.8 313.5 Q415.5 317.1 417.3 319.5 Q419.1 322.0 421.7 323.3 Q424.4 324.7 427.4 324.8 Q430.4 324.8 433.4 325.3 Q436.4 325.7 439.2 326.7 Q442.0 327.7 445.0 327.5 Q448.0 327.4 450.8 326.2 Q453.5 324.9 456.5 324.8 Q459.5 324.7 462.4 324.0 Q465.3 323.3 468.3 323.5 M784.7 300.4 Q781.2 295.5 779.1 293.4 Q777.1 291.2 775.6 288.6 Q774.1 286.0 771.9 284.0 Q769.6 282.0 768.3 279.3 Q767.0 276.6 765.1 274.3 Q763.2 272.0 762.1 269.2 Q761.0 266.4 759.0 264.1 M557.2 389.5 Q558.1 395.4 559.3 398.2 Q560.5 400.9 562.0 403.5 Q563.6 406.1 565.8 408.1 Q568.0 410.1 570.4 411.9 Q572.8 413.7 575.0 415.8 Q577.1 417.8 579.7 419.4 Q582.3 421.0 585.0 422.1 Q587.8 423.2 590.7 424.0 M782.5 139.7 Q784.0 133.9 784.3 130.9 Q784.6 127.9 786.0 125.3 Q787.4 122.6 788.9 120.0 Q790.5 117.5 792.2 115.0 M852.7 78.9 Q858.6 80.0 861.6 80.2 Q864.6 80.4 867.6 80.2 Q870.6 80.0 873.5 79.4 Q876.5 78.8 879.0 77.3 Q881.6 75.7 883.9 73.7 Q886.1 71.8 887.4 69.1 Q888.7 66.3 889.2 63.4 Q889.7 60.4 890.5 57.5 Q891.3 54.7 893.3 52.4 Q895.4 50.2 896.9 47.6 M568.0 157.1 Q574.0 157.2 576.9 158.0 Q579.8 158.8 582.8 158.7 Q585.8 158.7 588.7 158.0 Q591.7 157.4 594.6 157.1 Q597.6 156.8 600.6 156.2 Q603.5 155.7 606.4 154.8 Q609.2 153.8 611.4 151.7 Q613.5 149.7 615.7 147.5 Q617.8 145.4 620.2 143.6 M202.4 59.7 Q196.4 59.6 193.4 59.9 Q190.5 60.3 187.7 61.4 Q184.9 62.6 182.1 63.5 Q179.2 64.4 176.3 65.0 Q173.3 65.7 170.7 67.2 Q168.1 68.6 165.4 69.8 Q162.6 70.9 159.8 72.1 Q157.1 73.4 155.0 75.5 M894.7 131.8 Q900.0 134.7 903.0 135.1 Q905.9 135.6 908.8 136.5 Q911.6 137.4 914.6 137.6 Q917.6 137.9 920.4 139.0 Q923.2 140.2 925.1 142.5 M210.6 351.8 Q215.6 348.5 218.2 346.9 Q220.7 345.3 223.3 343.7 Q225.8 342.1 227.7 339.8 Q229.5 337.4 230.0 334.4 Q230.6 331.5 229.8 328.6 Q229.0 325.7 227.0 323.5 Q224.9 321.3 222.3 319.8 Q219.7 318.3 216.7 317.8 Q213.8 317.3 211.3 315.6 Q208.8 314.0 205.8 313.4 Q202.9 312.8 200.0 311.9 M677.3 114.2 Q671.5 115.5 669.0 117.1 Q666.4 118.7 664.2 120.8 Q662.0 122.8 660.3 125.3 Q658.5 127.7 658.0 130.6 Q657.5 133.6 655.9 136.1 Q654.3 138.7 652.1 140.7 Q649.8 142.7 647.2 144.2 Q644.6 145.6 643.0 148.2 Q641.4 150.7 639.0 152.5 Q636.7 154.4 633.9 155.6 M528.5 321.6 Q522.6 320.4 519.6 320.6 Q516.6 320.7 513.6 320.4 Q510.7 320.1 507.8 320.9 Q504.9 321.7 501.9 321.4 Q498.9 321.0 496.4 319.5 Q493.8 317.9 492.1 315.4 Q490.5 312.9 488.3 310.9 M207.8 281.3 Q204.2 276.5 203.5 273.6 Q202.9 270.6 203.4 267.7 Q203.9 264.7 203.2 261.8 Q202.4 258.9 201.7 256.0 Q201.0 253.1 199.4 250.5 Q197.8 248.0 197.3 245.0 Q196.9 242.1 197.4 239.1 Q197.9 236.2 197.6 233.2 M290.7 387.6 Q293.8 392.8 295.9 394.9 Q298.1 396.9 299.2 399.7 Q300.3 402.5 301.1 405.4 Q301.9 408.3 302.1 411.3 Q302.3 414.3 302.0 417.3 Q301.7 420.3 300.0 422.8 Q298.4 425.3 296.8 427.8 Q295.3 430.4 293.0 432.3 Q290.6 434.2 288.0 435.6 Q285.3 437.0 282.4 437.4 M506.7 315.1 Q502.2 311.1 499.8 309.3 Q497.4 307.6 495.1 305.6 Q492.8 303.7 490.6 301.6 Q488.5 299.5 485.8 298.2 Q483.1 296.9 480.1 297.0 Q477.1 297.1 474.3 298.3 Q471.6 299.5 468.7 300.4 Q465.8 301.2 463.4 303.0 M926.4 306.0 Q932.0 308.2 934.6 309.7 Q937.2 311.2 939.5 313.2 Q941.7 315.2 943.5 317.6 Q945.2 320.1 947.8 321.6 Q950.4 323.0 952.9 324.8 Q955.3 326.5 958.0 327.9 M802.2 351.3 Q808.0 349.4 811.0 349.3 Q814.0 349.1 816.9 349.6 Q819.9 350.1 822.9 350.2 Q825.9 350.4 828.8 349.7 Q831.7 349.1 834.4 347.7 M193.3 400.7 Q199.1 399.3 202.1 398.9 Q205.1 398.6 208.0 397.7 Q210.8 396.8 213.1 394.8 Q215.3 392.8 216.6 390.1 Q217.9 387.4 219.9 385.1 M326.3 160.6 Q321.4 164.1 318.5 164.7 Q315.5 165.3 313.2 167.1 Q310.8 168.9 308.0 170.1 Q305.2 171.2 302.2 171.2 M764.7 268.4 Q758.7 268.6 756.1 270.0 Q753.4 271.5 750.9 273.1 Q748.5 274.8 746.1 276.6 Q743.7 278.4 740.9 279.6 Q738.1 280.7 735.5 282.2 Q733.0 283.7 730.1 284.7 Q727.3 285.7 724.4 286.5 Q721.5 287.4 719.0 289.0 M837.0 73.6 Q839.1 68.0 840.3 65.3 Q841.5 62.5 842.0 59.6 Q842.6 56.6 843.8 53.9 Q845.1 51.2 845.0 48.2 Q845.0 45.2 844.5 42.2 Q844.0 39.2 842.4 36.7 M707.2 353.5 Q713.0 354.9 715.9 355.7 Q718.8 356.5 721.6 357.5 Q724.4 358.5 727.4 358.5 Q730.4 358.5 733.3 359.4 Q736.1 360.3 738.3 362.4 Q740.5 364.5 743.2 365.9 Q745.8 367.3 748.8 367.7 Q751.8 368.2 754.3 369.8 Q756.8 371.5 758.7 373.8 M548.0 416.6 Q542.7 413.7 539.9 412.6 Q537.1 411.5 534.2 410.7 Q531.3 409.9 528.4 409.5 Q525.4 409.0 522.9 407.4 Q520.3 405.8 517.3 405.4 M857.3 48.6 Q859.4 54.2 860.3 57.1 Q861.2 60.0 862.9 62.4 Q864.7 64.8 865.2 67.8 Q865.6 70.7 865.7 73.7 Q865.7 76.7 864.5 79.5 Q863.2 82.2 863.1 85.2 Q862.9 88.2 862.5 91.2 Q862.1 94.1 861.1 97.0 M637.4 51.9 Q633.5 47.3 631.5 45.1 Q629.5 42.9 627.6 40.5 Q625.7 38.2 623.4 36.3 Q621.1 34.3 618.7 32.5 Q616.4 30.6 614.4 28.3 Q612.5 26.1 610.0 24.3 M346.5 166.3 Q342.8 161.6 340.4 159.7 Q338.1 157.8 336.3 155.4 Q334.5 153.1 333.5 150.2 Q332.6 147.4 332.0 144.4 Q331.4 141.5 331.4 138.5 Q331.5 135.5 332.9 132.8 Q334.4 130.2 336.3 127.9 M635.4 171.8 Q637.4 177.5 637.0 180.5 Q636.6 183.5 634.9 185.9 Q633.1 188.3 632.3 191.2 Q631.4 194.1 630.2 196.8 Q628.9 199.5 628.5 202.5 Q628.0 205.5 628.7 208.4 Q629.3 211.3 630.9 213.9 M401.7 152.3 Q400.0 158.1 400.4 161.0 Q400.7 164.0 401.8 166.8 Q403.0 169.6 404.5 172.2 Q405.9 174.8 408.4 176.5 Q410.9 178.1 413.6 179.6 M781.6 303.2 Q775.6 303.4 772.8 304.6 Q770.1 305.7 767.2 306.6 Q764.3 307.4 761.5 308.6 Q758.8 309.7 755.8 310.1 Q752.8 310.5 749.9 309.8 Q747.0 309.0 744.1 308.4 Q741.1 307.8 738.3 307.0 Q735.4 306.2 732.8 304.7 M494.2 126.1 Q494.3 120.1 494.7 117.1 Q495.1 114.1 495.4 111.2 Q495.7 108.2 495.4 105.2 Q495.2 102.2 495.3 99.2 Q495.4 96.2 494.3 93.4 Q493.3 90.6 492.0 87.9 Q490.7 85.2 490.2 82.2 M721.1 278.9 Q721.2 284.9 722.7 287.5 Q724.1 290.2 724.5 293.1 Q724.9 296.1 725.3 299.1 Q725.6 302.1 725.5 305.0 Q725.4 308.0 724.2 310.8 Q723.0 313.5 720.8 315.6 Q718.7 317.7 716.9 320.1 Q715.1 322.5 714.7 325.5 Q714.2 328.5 712.9 331.1 Q711.5 333.8 709.2 335.7 M249.7 134.7 Q250.8 140.6 252.4 143.1 Q254.0 145.6 255.5 148.2 Q257.0 150.9 258.3 153.5 Q259.7 156.2 260.4 159.1 Q261.1 162.0 261.9 165.0 Q262.6 167.9 262.8 170.9 Q263.1 173.8 262.5 176.8 M572.4 195.3 Q578.3 196.3 581.2 195.8 Q584.2 195.4 587.2 194.9 Q590.1 194.5 593.0 195.4 Q595.9 196.2 598.5 197.7 Q601.1 199.2 603.5 201.0 Q605.9 202.8 608.1 204.9 Q610.2 207.0 612.8 208.5 M463.7 62.4 Q468.6 65.8 470.8 67.9 Q472.9 70.0 474.9 72.3 Q476.9 74.6 479.5 75.9 Q482.2 77.2 485.1 78.0 Q488.0 78.8 491.0 79.3 Q493.9 79.8 496.4 81.6 Q498.8 83.3 500.2 86.0 Q501.5 88.7 501.5 91.7 Q501.4 94.7 500.1 97.3 Q498.7 100.0 497.4 102.7 M294.8 393.1 Q300.4 395.5 303.0 396.8 Q305.7 398.1 308.7 398.7 Q311.6 399.3 314.0 401.1 Q316.4 402.9 319.0 404.4 Q321.6 405.8 324.0 407.6 Q326.4 409.4 328.1 411.9 Q329.8 414.4 330.7 417.2 M530.7 151.1 Q525.7 147.8 523.1 146.3 Q520.6 144.7 518.6 142.5 Q516.6 140.3 514.0 138.7 Q511.5 137.1 509.3 135.0 Q507.2 132.9 505.4 130.4 Q503.7 128.0 503.3 125.0 M694.4 222.5 Q695.7 216.6 696.7 213.8 Q697.8 211.0 698.3 208.0 Q698.8 205.1 699.3 202.1 Q699.8 199.2 700.6 196.3 Q701.5 193.4 701.1 190.4 Q700.7 187.5 701.5 184.6 Q702.3 181.7 702.1 178.7 Q701.9 175.7 701.0 172.8 M466.2 71.5 Q461.6 67.7 458.8 66.7 Q455.9 65.7 453.5 63.9 Q451.2 62.1 449.1 59.9 Q447.0 57.8 444.1 56.9 Q441.2 56.0 438.3 56.5 Q435.3 57.1 432.5 56.2 Q429.6 55.4 426.8 54.2 Q424.1 53.0 421.2 52.4 Q418.2 51.9 415.3 52.6 M277.9 128.0 Q280.5 122.6 281.0 119.6 Q281.4 116.7 281.6 113.7 Q281.8 110.7 282.1 107.7 Q282.3 104.7 282.9 101.8 Q283.6 98.8 284.7 96.1 Q285.8 93.3 288.1 91.4 Q290.4 89.4 291.7 86.7 Q293.1 84.0 295.3 82.1 Q297.6 80.1 300.0 78.3" fill="none" stroke="#d9d6c8" stroke-width=".7" opacity=".6"/><ellipse cx="199.6" cy="47.7" rx="3" ry="1.8" fill="#bfe0f2"/><ellipse cx="351" cy="55.6" rx="4.6" ry="3.6" fill="#bfe0f2"/><ellipse cx="530.6" cy="48.6" rx="9" ry="7" fill="#bfe0f2"/><ellipse cx="546" cy="69.6" rx="3.6" ry="2.6" fill="#bfe0f2"/><ellipse cx="279" cy="146.5" rx="3" ry="2.2" fill="#bfe0f2"/><ellipse cx="337" cy="156" rx="3.2" ry="4.4" fill="#bfe0f2"/><ellipse cx="236" cy="332" rx="5" ry="3" fill="#bfe0f2"/><ellipse cx="207" cy="348" rx="4" ry="3" fill="#bfe0f2"/><ellipse cx="380" cy="300" rx="3" ry="2" fill="#bfe0f2"/><ellipse cx="744" cy="286" rx="3" ry="2" fill="#bfe0f2"/><path d="M178 60 C200 90 230 130 236 175" fill="none" stroke="#dcdad0" stroke-width="0.7"/><path d="M255 45 C290 90 300 110 330 150" fill="none" stroke="#dcdad0" stroke-width="0.7"/><path d="M380.5 81 a7 8.4 0 1 0 14 0 a7 8.4 0 1 0 -14 0" fill="none" stroke="#dcdad0" stroke-width="0.7"/><path d="M180 215 C210 230 240 225 262 250 C270 270 250 290 232 296" fill="none" stroke="#dcdad0" stroke-width="0.7"/><path d="M270 310 C285 330 290 345 300 355" fill="none" stroke="#dcdad0" stroke-width="0.7"/><path d="M310 330 C318 345 322 355 330 362" fill="none" stroke="#dcdad0" stroke-width="0.7"/><path d="M282 300 a9 5 30 1 0 18 8 a9 5 30 1 0 -18 -8" fill="none" stroke="#dcdad0" stroke-width="0.7"/><path d="M306 332 a6 12 -30 1 0 14 22 a6 12 -30 1 0 -14 -22" fill="none" stroke="#dcdad0" stroke-width="0.7"/><path d="M200 60 C222 100 232 120 240 150" fill="none" stroke="#dcdad0" stroke-width="0.7"/><path d="M215 52 C240 95 262 120 300 175" fill="none" stroke="#dcdad0" stroke-width="0.7"/><path d="M272 60 C300 98 318 120 340 140" fill="none" stroke="#dcdad0" stroke-width="0.7"/><path d="M590 345 a5 3 0 1 0 10 0 a5 3 0 1 0 -10 0" fill="none" stroke="#dcdad0" stroke-width="0.7"/><path d="M618 362 a5 3 20 1 0 10 2 a5 3 20 1 0 -10 -2" fill="none" stroke="#dcdad0" stroke-width="0.7"/><path d="M190 150 C204 170 198 196 214 210" fill="none" stroke="#dcdad0" stroke-width="0.7"/><path d="M600 60 C620 90 660 100 690 130" fill="none" stroke="#dcdad0" stroke-width="0.7"/><path d="M480 150 C520 160 560 150 600 170" fill="none" stroke="#dcdad0" stroke-width="0.7"/><path d="M742 41.6 H774.5 V67.3 H742 Z" fill="none" stroke="#bdbdbd" stroke-width=".8" stroke-dasharray="1.6 1.6"/><path d="M721 118.6 H735 M721 118.6 V145 H735" fill="none" stroke="#bdbdbd" stroke-width=".8" stroke-dasharray="1.6 1.6"/><path d="M823.6 345 V364" fill="none" stroke="#bdbdbd" stroke-width=".8" stroke-dasharray="1.6 1.6"/><path d="M412.4 39 V312 Q412.4 322.6 424 322.6 H648 C690 323 720 334 745.6 339 C760 342 770 344 778 343.6 C796 343 808 340 820 335.6 C828 332 832 328 838.4 327.4 C850 326.6 858 329 866 333 C880 340 892 348 903.4 354 C918 361 930 362 945 363.4" fill="none" stroke="#bcc0bc" stroke-width="0.9"/><path d="M412 300 C410 350 390 390 364 420" fill="none" stroke="#bcc0bc" stroke-width="0.8"/><path d="M823.6 300 V345 M620 158.6 H735 M838 39 V75" fill="none" stroke="#c4c4c4" stroke-width="0.8"/><path d="M906.8 302 V321 C905 330 899 340 892 349" fill="none" stroke="#8d8585" stroke-width="0.9"/><path d="M857 36 L879 51 M903 65 L918 73 L944 96 M828.7 39 V47" fill="none" stroke="#8e8e8e" stroke-width="1.9"/><path d="M880 50 C872 60 868 66 866 72 M890 39 C900 44 915 38 930 42 C940 46 942 52 938 60 C934 68 928 72 924 74" fill="none" stroke="#9a9aa5" stroke-width=".8"/><path d="M167 107 C180 116 196 121 210 128 C222 134 232 132 244 130 C256 126 268 126 278 131 C288 137 292 143 304 143 H436 C448 143 452 140 466 139.6 H945" fill="none" stroke="#9b9b9b" stroke-width="2.1"/><circle cx="412.4" cy="143" r="2.6" fill="none" stroke="#bdbdbd" stroke-width=".7"/><path d="M293.4 136.0 H305.0 V143.5 Q304.5 146 299.2 148.0 Q293.9 146 293.4 143.5 Z" fill="#b3b9a4" stroke="#a3a994" stroke-width=".6"/><path d="M299.2 137.4 L302.59999999999997 141 L301.59999999999997 144.6 L299.2 146.4 L296.8 144.6 L295.8 141 Z" fill="#fbfbf6"/><text x="299.2" y="144.3" font-size="6" font-weight="700" text-anchor="middle" fill="#222" font-family="Liberation Sans, sans-serif">1</text><path d="M631.6 134.2 H643.1999999999999 V141.7 Q642.6999999999999 144.2 637.4 146.2 Q632.1 144.2 631.6 141.7 Z" fill="#b3b9a4" stroke="#a3a994" stroke-width=".6"/><path d="M637.4 135.6 L640.8 139.2 L639.8 142.79999999999998 L637.4 144.6 L635.0 142.79999999999998 L634.0 139.2 Z" fill="#fbfbf6"/><text x="637.4" y="142.5" font-size="6" font-weight="700" text-anchor="middle" fill="#222" font-family="Liberation Sans, sans-serif">1</text><path d="M406.4 190.4 H418.0 V197.9 Q417.5 200.4 412.2 202.4 Q406.9 200.4 406.4 197.9 Z" fill="#fefefe" stroke="#c3c8c1" stroke-width="1"/><text x="412.2" y="198.6" font-size="6" font-weight="700" text-anchor="middle" fill="#333" font-family="Liberation Sans, sans-serif">22</text><path d="M521.0 316.6 H532.5999999999999 V324.1 Q532.0999999999999 326.6 526.8 328.6 Q521.5 326.6 521.0 324.1 Z" fill="#fefefe" stroke="#c3c8c1" stroke-width="1"/><text x="526.8" y="324.8" font-size="6" font-weight="700" text-anchor="middle" fill="#333" font-family="Liberation Sans, sans-serif">8</text><text x="233" y="293" transform="rotate(-62 233 293)" font-family="Liberation Serif, serif" font-style="italic" font-size="6.3" letter-spacing="0.5" fill="#7d8a86">Jumpingpound Creek</text><text x="470" y="290" transform="rotate(-12 470 290)" font-family="Liberation Serif, serif" font-style="italic" font-size="6.8" letter-spacing="0.5" fill="#7d8a86">Pirmez Creek</text><text x="582" y="282" transform="rotate(3 582 282)" font-family="Liberation Serif, serif" font-style="italic" font-size="6.8" letter-spacing="0.5" fill="#8fb3a6">Elbow River</text><text x="296" y="368" transform="rotate(18 296 368)" font-family="Liberation Serif, serif" font-style="italic" font-size="6.3" letter-spacing="0.5" fill="#7d8a86">Harris Creek</text><text x="502" y="396" transform="rotate(-80 502 396)" font-family="Liberation Serif, serif" font-style="italic" font-size="6" letter-spacing="0.5" fill="#7d8a86">Millburn Creek</text><text x="712" y="378" transform="rotate(55 712 378)" font-family="Liberation Serif, serif" font-style="italic" font-size="6" letter-spacing="0.5" fill="#7d8a86">Left Creek</text><text x="722" y="258" transform="rotate(75 722 258)" font-family="Liberation Serif, serif" font-style="italic" font-size="6" letter-spacing="0.5" fill="#7d8a86">Cullen Creek</text><text x="167" y="185.5" transform="rotate(12 167 185.5)" font-family="Liberation Serif, serif" font-style="italic" font-size="6" letter-spacing="0.5" fill="#7d8a86">nd Creek</text><text x="531.6" y="274.3" font-family="Liberation Serif, serif" font-size="7" fill="#2a2a2a" textLength="38.6" lengthAdjust="spacing">Pirmez Creek</text><text x="262" y="306" font-family="Liberation Sans, sans-serif" font-size="4.6" fill="#9a8c7c" transform="rotate(-8 262 306)">1200 m</text><circle cx="455.2" cy="185.2" r="7.9" fill="#a9dcd3" fill-opacity=".5" stroke="#36b5a2" stroke-width="3"/><circle cx="470.3" cy="188.8" r="3.9" fill="#a9dcd3" fill-opacity=".5" stroke="#36b5a2" stroke-width="3"/><circle cx="454.7" cy="197.3" r="4.3" fill="#aab6c2" fill-opacity=".8" stroke="#2f9080" stroke-width="3"/><circle cx="515.4" cy="185.7" r="4.8" fill="#e3bfcd" fill-opacity=".6" stroke="#a23a66" stroke-width="3"/><circle cx="537" cy="195.6" r="5.2" fill="#aab6c2" fill-opacity=".8" stroke="#2f9080" stroke-width="3"/><circle cx="571.9" cy="192.9" r="4.6" fill="#e3bfcd" fill-opacity=".6" stroke="#a23a66" stroke-width="3"/><circle cx="522.2" cy="215.7" r="8.2" fill="#e3bfcd" fill-opacity=".6" stroke="#a23a66" stroke-width="3"/><circle cx="531.7" cy="210.8" r="8.2" fill="#a9dcd3" fill-opacity=".5" stroke="#36b5a2" stroke-width="3"/><circle cx="539.9" cy="230.4" r="4.8" fill="#a9dcd3" fill-opacity=".5" stroke="#36b5a2" stroke-width="3"/><circle cx="549.7" cy="234.3" r="4.6" fill="#e3bfcd" fill-opacity=".6" stroke="#a23a66" stroke-width="3"/><circle cx="554.2" cy="230.2" r="4.4" fill="#e3bfcd" fill-opacity=".6" stroke="#a23a66" stroke-width="3"/><circle cx="568" cy="228.8" r="8.8" fill="#aab6c2" fill-opacity=".8" stroke="#2f9080" stroke-width="3"/><circle cx="596" cy="233" r="4.8" fill="#aab6c2" fill-opacity=".8" stroke="#2f9080" stroke-width="3"/><circle cx="612.7" cy="222.3" r="4.8" fill="#e3bfcd" fill-opacity=".6" stroke="#a23a66" stroke-width="3"/><circle cx="624" cy="235.3" r="8.8" fill="#aab6c2" fill-opacity=".8" stroke="#2f9080" stroke-width="3"/><circle cx="617.6" cy="250.7" r="12.5" fill="#e3bfcd" fill-opacity=".6" stroke="#a23a66" stroke-width="3"/><circle cx="617.6" cy="250.7" r="8.0" fill="#a9dcd3" fill-opacity=".5" stroke="#36b5a2" stroke-width="3"/><circle cx="532" cy="245.8" r="8.8" fill="#e3bfcd" fill-opacity=".6" stroke="#a23a66" stroke-width="3"/><circle cx="562.7" cy="246.8" r="5.0" fill="#aab6c2" fill-opacity=".8" stroke="#2f9080" stroke-width="3"/><circle cx="571.9" cy="258.9" r="8.8" fill="#e3bfcd" fill-opacity=".6" stroke="#a23a66" stroke-width="3"/><circle cx="585.9" cy="263.1" r="4.6" fill="#e3bfcd" fill-opacity=".6" stroke="#a23a66" stroke-width="3"/><circle cx="551.6" cy="285" r="8.8" fill="#e3bfcd" fill-opacity=".6" stroke="#a23a66" stroke-width="3"/><use href="#tb" x="436.6" y="164.3" width="10" height="14"/><use href="#tb" x="446.7" y="164.3" width="10" height="14"/><use href="#tb" x="469.9" y="164.3" width="10" height="14"/><use href="#tb" x="450.4" y="173.8" width="10" height="14"/><use href="#tb" x="464.6" y="176.6" width="10" height="14"/><use href="#tb" x="449.7" y="185.6" width="10" height="14"/><use href="#tb" x="510.4" y="173.8" width="10" height="14"/><use href="#tb" x="532.0" y="183.3" width="10" height="14"/><use href="#tb" x="526.7" y="197.3" width="10" height="14"/><use href="#tb" x="517.2" y="202.8" width="10" height="14"/><use href="#tb" x="545.5" y="199.3" width="10" height="14"/><use href="#tb" x="563.0" y="213.8" width="10" height="14"/><use href="#tb" x="535.0" y="217.8" width="10" height="14"/><use href="#tb" x="548.0" y="219.8" width="10" height="14"/><use href="#tb" x="551.5" y="215.3" width="10" height="14"/><use href="#tb" x="543.5" y="222.8" width="10" height="14"/><use href="#tb" x="557.7" y="232.3" width="10" height="14"/><use href="#tb" x="575.0" y="220.3" width="10" height="14"/><use href="#tb" x="576.5" y="226.8" width="10" height="14"/><use href="#tb" x="591.0" y="219.8" width="10" height="14"/><use href="#tb" x="607.7" y="208.8" width="10" height="14"/><use href="#tb" x="619.0" y="220.8" width="10" height="14"/><use href="#tb" x="612.6" y="234.8" width="10" height="14"/><use href="#tb" x="604.0" y="241.8" width="10" height="14"/><use href="#tb" x="566.9" y="243.3" width="10" height="14"/><use href="#tb" x="580.9" y="249.8" width="10" height="14"/><use href="#tb" x="590.5" y="244.8" width="10" height="14"/><use href="#tb" x="527.0" y="232.3" width="10" height="14"/><use href="#tb" x="546.6" y="271.3" width="10" height="14"/><use href="#tb" x="557.0" y="270.8" width="10" height="14"/></svg>
<div class="b" style="left:173.5px;top:45.5px;width:20.5px;height:38.5px;background:#fff;border:1px solid #c9c9c4;border-radius:2.5px;"></div>
<div class="b" style="left:174.5px;top:64.5px;width:18.5px;height:0.8px;background:#ccc;"></div>
<span class="t" style="left:178.90px;top:48px;font-size:14px;color:#111;font-weight:700;">+</span>
<div class="b" style="left:180.4px;top:73.4px;width:6.4px;height:1.7px;background:#111;"></div>
<div class="b" style="left:173.5px;top:90.5px;width:29.3px;height:28.4px;background:#fff;border:1px solid #c9c9c4;border-radius:2.5px;"></div>
<svg style="left:178.6px;top:96.2px" width="19" height="17" viewBox="0 0 19 17"><path d="M9.5 9.6 L1 13 L9.5 16.4 L18 13 Z" fill="#a6a6a6"/><path d="M9.5 6.3 L1 9.7 L9.5 13.1 L18 9.7 Z" fill="#bebebe" stroke="#fff" stroke-width=".5"/><path d="M9.5 1 L1 5.6 L9.5 10 L18 5.6 Z" fill="#d8d8d8" stroke="#fff" stroke-width=".5"/></svg>
<div class="b" style="left:523.6px;top:117.8px;width:96.2px;height:67.4px;background:#fff;border-radius:6.5px;box-shadow:0 1.5px 7px rgba(0,0,0,.38)"></div>
<div class="b" style="left:566.8px;top:180px;width:10.4px;height:10.4px;background:#fff;transform:rotate(45deg);box-shadow:1.5px 1.5px 3px rgba(0,0,0,.22)"></div>
<div class="b" style="left:560px;top:176px;width:24px;height:9.2px;background:#fff;"></div>
<span class="t" style="left:535.50px;top:127px;font-size:7.35px;color:#333;transform:scaleX(0.9820);">Facility: Shelley Pines</span>
<span class="t" style="left:535.50px;top:137px;font-size:7.35px;color:#333;transform:scaleX(0.9841);">Turbine: 6</span>
<span class="t" style="left:535.50px;top:147px;font-size:7.35px;color:#333;transform:scaleX(0.9862);">Size Class: Small Bird</span>
<span class="t" style="left:535.50px;top:157px;font-size:7.35px;color:#333;transform:scaleX(0.9712);">Fatalities: 1</span>
<span class="t" style="left:535.50px;top:167px;font-size:7.35px;color:#333;transform:scaleX(0.9777);">Year: 2021</span>
<span class="t" style="left:609.80px;top:119px;font-size:9.5px;color:#b5b5b5;">×</span>
<div class="b" style="left:169.6px;top:343.3px;width:125.6px;height:44.2px;background:rgba(255,255,255,.82);border-radius:2px;"></div>
<span class="t" style="left:178.20px;top:347px;font-size:8.8px;color:#484848;transform:scaleX(0.9727);font-weight:700;">Project Layers</span>
<div class="b" style="left:178.6px;top:361.8px;width:9px;height:9px;background:#8e2450;border-radius:50%;"></div>
<div class="b" style="left:178.6px;top:374.6px;width:9px;height:9px;background:#26a795;border-radius:50%;"></div>
<span class="t" style="left:192.70px;top:362px;font-size:8.9px;color:#555;transform:scaleX(0.9493);">Small Bird</span>
<span class="t" style="left:192.70px;top:375px;font-size:8.9px;color:#555;transform:scaleX(0.9449);">Large Bird</span>
<div class="b" style="left:171.2px;top:398.2px;width:49.4px;height:9.6px;background:rgba(255,255,255,.55);border:1.1px solid #666;border-top:none;"></div>
<div class="b" style="left:171.2px;top:407.0px;width:39.6px;height:9.4px;background:rgba(255,255,255,.55);border:1.1px solid #666;border-bottom:none;border-top:1.1px solid #666;"></div>
<span class="t" style="left:174.40px;top:400px;font-size:6.6px;color:#333;transform:scaleX(0.9509);">2 km</span>
<span class="t" style="left:174.60px;top:410px;font-size:6.6px;color:#333;transform:scaleX(0.9303);">1 mi</span>
<div class="b" style="left:289.2px;top:410.4px;width:655.8px;height:9.6px;background:rgba(255,255,255,.75);"></div>
<span class="t" style="left:291.60px;top:412px;font-size:6.7px;color:#2a7ab8;transform:scaleX(1.0041);">Leaflet</span>
<span class="t" style="left:313.60px;top:412px;font-size:6.7px;color:#444;">| Tiles © Esri — Esri, DeLorme, NAVTEQ, TomTom, Intermap, iPC, USGS, FAO, NPS, NRCAN, GeoBase, Kadaster NL, Ordnance Survey, Esri Japan, METI, Esri China (Hong Kong), and the GIS User Community</span>
<div class="b" style="left:808px;top:46.6px;width:69px;height:19.6px;background:#2f4fa3;border-radius:2px;"></div>
<div class="b" style="left:881.4px;top:46.6px;width:58px;height:19.6px;background:#e4604c;border-radius:2px;"></div>
<span class="t" style="left:815.50px;top:52px;font-size:9.3px;color:#fff;transform:scaleX(0.9088);-webkit-text-stroke:0.4px #fff;">Upload Layers</span>
<span class="t" style="left:889.00px;top:52px;font-size:9.3px;color:#fff;transform:scaleX(0.9324);-webkit-text-stroke:0.4px #fff;">Map Inputs</span>
<div class="b" style="left:734.2px;top:73px;width:205.4px;height:229.4px;background:#fdfdfc;box-shadow:0 1px 3px rgba(0,0,0,.18);"></div>
<div class="b" style="left:734.2px;top:73px;width:205.4px;height:219px;background:#f7f7f5;"></div>
<div class="b" style="left:932.2px;top:76.6px;border-left:2.6px solid transparent;border-right:2.6px solid transparent;border-bottom:3px solid #555"></div>
<div class="b" style="left:932.2px;top:295.4px;border-left:2.6px solid transparent;border-right:2.6px solid transparent;border-top:3px solid #555"></div>
<span class="t" style="left:740.70px;top:77px;font-size:11.6px;color:#2f4a37;transform:scaleX(0.9477);-webkit-text-stroke:0.5px #2f4a37;">Select Map Inputs</span>
<span class="t" style="left:740.70px;top:103px;font-size:9.3px;color:#2b2b2b;transform:scaleX(0.8600);font-weight:700;">Select Project</span>
<span class="t" style="left:841.80px;top:103px;font-size:9.3px;color:#2b2b2b;transform:scaleX(0.8490);font-weight:700;">Select Year</span>
<span class="t" style="left:740.70px;top:155px;font-size:9.3px;color:#2b2b2b;transform:scaleX(0.8489);font-weight:700;">Show Turbines</span>
<span class="t" style="left:841.80px;top:155px;font-size:9.3px;color:#2b2b2b;transform:scaleX(0.8523);font-weight:700;">Show Fatalities</span>
<span class="t" style="left:740.70px;top:249px;font-size:9.3px;color:#2b2b2b;transform:scaleX(0.8382);font-weight:700;">Reference Layers</span>
<span class="t" style="left:752.70px;top:119px;font-size:9.2px;color:#424242;transform:scaleX(0.9521);-webkit-text-stroke:0.15px #424242;">Greenbird Still</span>
<svg style="left:740.7px;top:119.5px" width="8" height="8" viewBox="0 0 8 8"><rect width="8" height="8" rx="1.3" fill="#1a6fe0"/><path d="M1.7 4.1 L3.3 5.7 L6.4 2.3" fill="none" stroke="#fff" stroke-width="1.25"/></svg>
<span class="t" style="left:752.70px;top:134px;font-size:9.2px;color:#424242;transform:scaleX(0.9185);-webkit-text-stroke:0.15px #424242;">Shelley Pines</span>
<svg style="left:740.7px;top:134.4px" width="8" height="8" viewBox="0 0 8 8"><rect width="8" height="8" rx="1.3" fill="#1a6fe0"/><path d="M1.7 4.1 L3.3 5.7 L6.4 2.3" fill="none" stroke="#fff" stroke-width="1.25"/></svg>
<span class="t" style="left:752.70px;top:170px;font-size:9.2px;color:#424242;transform:scaleX(0.9253);-webkit-text-stroke:0.15px #424242;">Sampled</span>
<svg style="left:740.7px;top:170.7px" width="8" height="8" viewBox="0 0 8 8"><rect width="8" height="8" rx="1.3" fill="#1a6fe0"/><path d="M1.7 4.1 L3.3 5.7 L6.4 2.3" fill="none" stroke="#fff" stroke-width="1.25"/></svg>
<span class="t" style="left:752.70px;top:185px;font-size:9.2px;color:#424242;transform:scaleX(0.9326);-webkit-text-stroke:0.15px #424242;">Not Sampled</span>
<svg style="left:740.7px;top:185.8px" width="8" height="8" viewBox="0 0 8 8"><rect width="8" height="8" rx="1.3" fill="#1a6fe0"/><path d="M1.7 4.1 L3.3 5.7 L6.4 2.3" fill="none" stroke="#fff" stroke-width="1.25"/></svg>
<span class="t" style="left:752.70px;top:264px;font-size:9.2px;color:#424242;transform:scaleX(0.9396);-webkit-text-stroke:0.15px #424242;">Alberta Natural Subregions</span>
<div class="b" style="left:740.7px;top:264.4px;width:8px;height:8px;background:#fff;border:1px solid #8a8a8a;border-radius:1.3px;"></div>
<span class="t" style="left:853.90px;top:119px;font-size:9.2px;color:#424242;transform:scaleX(0.7964);-webkit-text-stroke:0.15px #424242;">2021</span>
<div class="b" style="left:841.8px;top:119.5px;width:8px;height:8px;background:#fff;border:1.1px solid #1a6fe0;border-radius:50%;"></div>
<div class="b" style="left:843.8px;top:121.5px;width:4px;height:4px;background:#1a6fe0;border-radius:50%;"></div>
<span class="t" style="left:853.90px;top:134px;font-size:9.2px;color:#424242;transform:scaleX(0.7964);-webkit-text-stroke:0.15px #424242;">2022</span>
<div class="b" style="left:841.8px;top:134.4px;width:8px;height:8px;background:#fff;border:1px solid #8a8a8a;border-radius:50%;"></div>
<span class="t" style="left:853.90px;top:170px;font-size:9.2px;color:#424242;transform:scaleX(0.9677);-webkit-text-stroke:0.15px #424242;">Non-migratory</span>
<div class="b" style="left:841.8px;top:170.7px;width:8px;height:8px;background:#fff;border:1px solid #8a8a8a;border-radius:1.3px;"></div>
<span class="t" style="left:853.90px;top:183px;font-size:9.2px;color:#424242;transform:scaleX(0.9414);-webkit-text-stroke:0.15px #424242;">Bat</span>
<span class="t" style="left:853.90px;top:198px;font-size:9.2px;color:#424242;transform:scaleX(0.9414);-webkit-text-stroke:0.15px #424242;">Migratory Bat</span>
<div class="b" style="left:841.8px;top:198.1px;width:8px;height:8px;background:#fff;border:1px solid #8a8a8a;border-radius:1.3px;"></div>
<span class="t" style="left:853.90px;top:213px;font-size:9.2px;color:#424242;transform:scaleX(0.9303);-webkit-text-stroke:0.15px #424242;">Small Bird</span>
<svg style="left:841.8px;top:213.1px" width="8" height="8" viewBox="0 0 8 8"><rect width="8" height="8" rx="1.3" fill="#1a6fe0"/><path d="M1.7 4.1 L3.3 5.7 L6.4 2.3" fill="none" stroke="#fff" stroke-width="1.25"/></svg>
<span class="t" style="left:853.90px;top:228px;font-size:9.2px;color:#424242;transform:scaleX(0.9070);-webkit-text-stroke:0.15px #424242;">Large Bird</span>
<svg style="left:841.8px;top:228.4px" width="8" height="8" viewBox="0 0 8 8"><rect width="8" height="8" rx="1.3" fill="#1a6fe0"/><path d="M1.7 4.1 L3.3 5.7 L6.4 2.3" fill="none" stroke="#fff" stroke-width="1.25"/></svg>
<div class="b" style="left:954px;top:0px;width:6.2px;height:429px;background:#d4d4d2;"></div>
<div class="b" style="left:954px;top:0px;width:8.5px;height:24px;background:#4b4650;"></div>
<div class="b" style="left:954px;top:24px;width:6.2px;height:6px;background:#726f78;"></div>
<div class="b" style="left:960.2px;top:0px;width:2.4px;height:429px;background:#3f3f41;"></div>
<div class="b" style="left:962.4px;top:0px;width:2.0px;height:429px;background:#050505;"></div>
<div class="b" style="left:964.35px;top:0px;width:956px;height:2.4px;background:#48444d;"></div>
<div class="b" style="left:1124.6px;top:33px;width:796px;height:393.6px;background:#e9eae1;"></div>
<div class="b" style="left:964.35px;top:33px;width:160.3px;height:393.6px;background:#446246;"></div>
<div class="b" style="left:964.35px;top:2.2px;width:956px;height:30.7px;background:#2e5235;"></div>
<div class="b" style="left:1124.6px;top:33px;width:796px;height:1px;background:#f1f3ec;"></div>
<div class="b" style="left:1124.6px;top:33px;width:1px;height:393.6px;background:#f1f3ec;"></div>
<div class="b" style="left:964.35px;top:31.5px;width:956px;height:1.4px;background:#29492f;"></div>
<div class="b" style="left:964.35px;top:426.6px;width:161px;height:3px;background:#4d4d4f;"></div>
<div class="b" style="left:1125px;top:426.6px;width:795px;height:3px;background:#fbfbe2;"></div>
<div class="b" style="left:1125px;top:426.0px;width:795px;height:1.2px;background:#f6f8f4;"></div>
<div class="b" style="left:974.5px;top:13.73px;width:7.51px;height:1.52px;background:#fff;border-radius:.5px;"></div>
<div class="b" style="left:974.5px;top:16.67px;width:7.51px;height:1.52px;background:#fff;border-radius:.5px;"></div>
<div class="b" style="left:974.5px;top:19.62px;width:7.51px;height:1.52px;background:#fff;border-radius:.5px;"></div>
<span class="t" style="left:991.23px;top:11px;font-size:13.59px;color:#fff;transform:scaleX(0.8263);font-weight:700;">MVP PCM Data Tracker</span>
<span class="t" style="left:974.50px;top:41px;font-size:9.94px;color:#fff;transform:scaleX(0.8084);font-weight:700;">Select a Project</span>
<div class="b" style="left:974.495px;top:56.13849999999999px;width:141.0155px;height:20.29px;background:#fff;border-radius:1px;"></div>
<span class="t" style="left:982.21px;top:62px;font-size:9.33px;color:#3c3c3c;transform:scaleX(0.9152);-webkit-text-stroke:0.2px #3c3c3c;">Shelley Pines</span>
<span class="t" style="left:974.50px;top:85px;font-size:9.94px;color:#fff;transform:scaleX(0.8127);font-weight:700;">Select a Year</span>
<div class="b" style="left:974.495px;top:99.762px;width:141.0155px;height:20.29px;background:#fff;border-radius:1px;"></div>
<span class="t" style="left:982.21px;top:106px;font-size:9.33px;color:#3c3c3c;transform:scaleX(0.8065);-webkit-text-stroke:0.2px #3c3c3c;">2021</span>
<div class="b" style="left:1098.57px;top:65.07px;width:0;height:0;border-left:3.04px solid transparent;border-right:3.04px solid transparent;border-top:3.25px solid #222"></div>
<div class="b" style="left:1098.57px;top:108.69px;width:0;height:0;border-left:3.04px solid transparent;border-right:3.04px solid transparent;border-top:3.25px solid #222"></div>
<span class="t" style="left:999.55px;top:130px;font-size:10.86px;color:#fff;transform:scaleX(0.8420);font-weight:700;">Project-specific Tabs</span>
<div class="b" style="left:964.35px;top:174.23px;width:160.3px;height:27.19px;background:#76915f;"></div>
<span class="t" style="left:990.42px;top:155px;font-size:9.54px;color:#f2f6ee;transform:scaleX(0.8746);-webkit-text-stroke:0.3px #f2f6ee;">Casualty Search Data</span>
<svg style="left:973.58px;top:154.90px" width="9.64" height="9.64" viewBox="0 0 10 10"><rect x="0.4" y="0.3" width="7.8" height="9.2" rx="1" fill="#f2f6ee"/></svg>
<span class="t" style="left:991.54px;top:182px;font-size:9.54px;color:#f2f6ee;transform:scaleX(0.9276);-webkit-text-stroke:0.3px #f2f6ee;">Casualty Information</span>
<svg style="left:973.58px;top:182.19px" width="9.64" height="9.64" viewBox="0 0 10 10"><rect x="0.2" y="0.9" width="9.4" height="8.4" rx="1.3" fill="#f2f6ee"/><rect x="1.5" y="2.4" width="2.8" height="2.1" fill="#446246"/><rect x="5.5" y="2.4" width="2.8" height="2.1" fill="#446246"/><rect x="1.5" y="5.7" width="2.8" height="2.1" fill="#446246"/><rect x="5.5" y="5.7" width="2.8" height="2.1" fill="#446246"/></svg>
<span class="t" style="left:991.54px;top:209px;font-size:9.54px;color:#f2f6ee;transform:scaleX(0.8988);-webkit-text-stroke:0.3px #f2f6ee;">Searcher Efficiency Trials</span>
<svg style="left:973.58px;top:209.18px" width="9.64" height="9.64" viewBox="0 0 10 10"><circle cx="4" cy="4" r="3" fill="none" stroke="#f2f6ee" stroke-width="1.5"/><path d="M6.2 6.2 L9.3 9.3" stroke="#f2f6ee" stroke-width="1.7" stroke-linecap="round"/></svg>
<span class="t" style="left:989.31px;top:236px;font-size:9.54px;color:#f2f6ee;transform:scaleX(0.8768);-webkit-text-stroke:0.3px #f2f6ee;">Carcass Persistence Trials</span>
<svg style="left:973.58px;top:236.26px" width="9.64" height="9.64" viewBox="0 0 10 10"><rect x="1.2" y="1.8" width="6.6" height="7.6" rx="1" fill="none" stroke="#f2f6ee" stroke-width="1.3"/><rect x="3" y="0.3" width="3" height="2.2" rx=".6" fill="#f2f6ee"/></svg>
<span class="t" style="left:991.54px;top:263px;font-size:9.54px;color:#f2f6ee;transform:scaleX(0.8977);-webkit-text-stroke:0.3px #f2f6ee;">Fatality Tracker</span>
<svg style="left:973.58px;top:263.25px" width="9.64" height="9.64" viewBox="0 0 10 10"><path d="M0.9 1.6 V8.7 H9.4" fill="none" stroke="#f2f6ee" stroke-width="1.6" stroke-linecap="round" stroke-linejoin="round"/><path d="M3 6.2 L4.9 4.2 L6.2 5.4 L8.8 2.8" fill="none" stroke="#f2f6ee" stroke-width="1.5" stroke-linecap="round" stroke-linejoin="round"/></svg>
<span class="t" style="left:991.54px;top:290px;font-size:9.54px;color:#f2f6ee;transform:scaleX(0.9318);-webkit-text-stroke:0.3px #f2f6ee;">Curtailment</span>
<svg style="left:973.58px;top:290.34px" width="9.64" height="9.64" viewBox="0 0 10 10"><path d="M0.9 1.6 V8.7 H9.4" fill="none" stroke="#f2f6ee" stroke-width="1.6" stroke-linecap="round" stroke-linejoin="round"/><rect x="2.8" y="2" width="2.6" height="1.9" fill="#f2f6ee"/><rect x="2.8" y="4.2" width="4.4" height="1.9" fill="#f2f6ee"/><rect x="2.8" y="6.3" width="5.8" height="1.6" fill="#f2f6ee"/></svg>
<span class="t" style="left:991.44px;top:350px;font-size:9.54px;color:#f2f6ee;transform:scaleX(0.9017);-webkit-text-stroke:0.3px #f2f6ee;">Project Comparisons</span>
<svg style="left:973.58px;top:349.89px" width="9.64" height="9.64" viewBox="0 0 10 10"><rect x="0.2" y="1.3" width="1.8" height="1.7" fill="#f2f6ee"/><rect x="3.2" y="1.45" width="6.6" height="1.4" fill="#f2f6ee"/><rect x="0.2" y="4.2" width="1.8" height="1.7" fill="#f2f6ee"/><rect x="3.2" y="4.3500000000000005" width="6.6" height="1.4" fill="#f2f6ee"/><rect x="0.2" y="7.1" width="1.8" height="1.7" fill="#f2f6ee"/><rect x="3.2" y="7.25" width="6.6" height="1.4" fill="#f2f6ee"/></svg>
<span class="t" style="left:992.45px;top:377px;font-size:9.54px;color:#f2f6ee;transform:scaleX(0.9009);-webkit-text-stroke:0.3px #f2f6ee;">Project Map</span>
<svg style="left:973.58px;top:377.18px" width="9.64" height="9.64" viewBox="0 0 10 10"><path d="M0.6 2.4 L3.4 1.2 L6.6 2.4 L9.6 1.2 V7.8 L6.6 9 L3.4 7.8 L0.6 9 Z M3.4 1.2 V7.8 M6.6 2.4 V9" fill="none" stroke="#f2f6ee" stroke-width="1.45" stroke-linejoin="round"/></svg>
<div class="b" style="left:974.495px;top:312.6px;width:141.0155px;height:1px;background:#b9c8b0;"></div>
<span class="t" style="left:1001.28px;top:325px;font-size:10.86px;color:#fff;transform:scaleX(0.8372);font-weight:700;">Across-project Tabs</span>
<div class="b" style="left:961.3px;top:174.2px;width:3.1px;height:26.6px;background:#c2c2c2;"></div>
<div class="b" style="left:963.4px;top:174.2px;width:1.0px;height:26.6px;background:#f2f2f2;"></div>
<svg style="left:1876.8px;top:5.2px" width="37.54" height="23.33" viewBox="0 0 37 23"><path d="M0.5 2.1 L3.3 1.1 L5.4 1.9 L7.5 2.3 L10.7 4 L13.6 5.6 L14.6 4.2 L17 2.4 L18.6 3.2 L20.7 4.8 L23.4 5.4 L26.5 6.6 L30.7 9.5 L36 10.2" fill="none" stroke="#fff" stroke-width="0.85" stroke-linejoin="round" stroke-linecap="round"/><path d="M0.4 10.1 L13 9.9 L36 10 L36 10.5 L13 10.9 L0.4 11.4 Z" fill="#fff"/></svg>
<span class="t" style="left:1877.92px;top:18px;font-size:12.48px;color:#fff;transform:scaleX(0.9652);">WEST</span>
<div class="b" style="left:1134.6px;top:42.6px;width:778.6px;height:375.2px;background:#f8f8f6;border:1px solid #deded8;border-radius:1.5px;box-shadow:0 1px 1px rgba(0,0,0,.06);"></div>
<span class="t" style="left:1141.40px;top:49px;font-size:12.6px;color:#2f4a37;transform:scaleX(0.8545);-webkit-text-stroke:0.5px #2f4a37;">Fatality Figures</span>
<div class="b" style="left:1140.4px;top:94.0px;width:765.6px;height:1px;background:#deded9;"></div>
<div class="b" style="left:1140.4px;top:74.3px;width:60.8px;height:20px;background:#dddddb;border-radius:2.5px 2.5px 0 0;"></div>
<div class="b" style="left:1260.2px;top:74.3px;width:49.6px;height:20px;background:#dddddb;border-radius:2.5px 2.5px 0 0;"></div>
<div class="b" style="left:1204.6px;top:74.3px;width:52.2px;height:20.8px;background:#f8f8f6;border:1px solid #e2e2dd;border-bottom:none;border-radius:2.5px 2.5px 0 0;"></div>
<span class="t" style="left:1150.70px;top:79px;font-size:9.4px;color:#555;transform:scaleX(0.9102);">By Turbine</span>
<span class="t" style="left:1214.50px;top:79px;font-size:9.4px;color:#555;transform:scaleX(0.8734);">By Week</span>
<span class="t" style="left:1270.20px;top:79px;font-size:9.4px;color:#555;transform:scaleX(0.8703);">By Date</span>
<svg style="left:0;top:0" width="1920" height="429" viewBox="0 0 1920 429"><defs><pattern id="hm" width="3" height="3" patternUnits="userSpaceOnUse" patternTransform="rotate(-45)"><rect width="3" height="3" fill="#fff"/><rect width="3" height="1.6" fill="#8f1f50"/></pattern><pattern id="hg" width="3" height="3" patternUnits="userSpaceOnUse" patternTransform="rotate(-45)"><rect width="3" height="3" fill="#fff"/><rect width="3" height="1.6" fill="#222"/></pattern><pattern id="hl" width="2.6" height="2.6" patternUnits="userSpaceOnUse" patternTransform="rotate(-45)"><rect width="2.6" height="2.6" fill="#fff"/><rect width="2.6" height="1.5" fill="#555"/></pattern></defs><rect x="1207.9" y="118.9" width="535.8" height="181.79999999999998" fill="#fff"/><path d="M1215.70 118.9 V300.7" stroke="#ececec" stroke-width="0.9"/><path d="M1230.58 118.9 V300.7" stroke="#ececec" stroke-width="0.9"/><path d="M1245.46 118.9 V300.7" stroke="#ececec" stroke-width="0.9"/><path d="M1260.34 118.9 V300.7" stroke="#ececec" stroke-width="0.9"/><path d="M1275.22 118.9 V300.7" stroke="#ececec" stroke-width="0.9"/><path d="M1290.10 118.9 V300.7" stroke="#ececec" stroke-width="0.9"/><path d="M1304.98 118.9 V300.7" stroke="#ececec" stroke-width="0.9"/><path d="M1319.86 118.9 V300.7" stroke="#ececec" stroke-width="0.9"/><path d="M1334.74 118.9 V300.7" stroke="#ececec" stroke-width="0.9"/><path d="M1349.62 118.9 V300.7" stroke="#ececec" stroke-width="0.9"/><path d="M1364.50 118.9 V300.7" stroke="#ececec" stroke-width="0.9"/><path d="M1379.38 118.9 V300.7" stroke="#ececec" stroke-width="0.9"/><path d="M1394.26 118.9 V300.7" stroke="#ececec" stroke-width="0.9"/><path d="M1409.14 118.9 V300.7" stroke="#ececec" stroke-width="0.9"/><path d="M1424.02 118.9 V300.7" stroke="#ececec" stroke-width="0.9"/><path d="M1438.90 118.9 V300.7" stroke="#ececec" stroke-width="0.9"/><path d="M1453.78 118.9 V300.7" stroke="#ececec" stroke-width="0.9"/><path d="M1468.66 118.9 V300.7" stroke="#ececec" stroke-width="0.9"/><path d="M1483.54 118.9 V300.7" stroke="#ececec" stroke-width="0.9"/><path d="M1498.42 118.9 V300.7" stroke="#ececec" stroke-width="0.9"/><path d="M1513.30 118.9 V300.7" stroke="#ececec" stroke-width="0.9"/><path d="M1528.18 118.9 V300.7" stroke="#ececec" stroke-width="0.9"/><path d="M1543.06 118.9 V300.7" stroke="#ececec" stroke-width="0.9"/><path d="M1557.94 118.9 V300.7" stroke="#ececec" stroke-width="0.9"/><path d="M1572.82 118.9 V300.7" stroke="#ececec" stroke-width="0.9"/><path d="M1587.70 118.9 V300.7" stroke="#ececec" stroke-width="0.9"/><path d="M1602.58 118.9 V300.7" stroke="#ececec" stroke-width="0.9"/><path d="M1617.46 118.9 V300.7" stroke="#ececec" stroke-width="0.9"/><path d="M1632.34 118.9 V300.7" stroke="#ececec" stroke-width="0.9"/><path d="M1647.22 118.9 V300.7" stroke="#ececec" stroke-width="0.9"/><path d="M1662.10 118.9 V300.7" stroke="#ececec" stroke-width="0.9"/><path d="M1676.98 118.9 V300.7" stroke="#ececec" stroke-width="0.9"/><path d="M1691.86 118.9 V300.7" stroke="#ececec" stroke-width="0.9"/><path d="M1706.74 118.9 V300.7" stroke="#ececec" stroke-width="0.9"/><path d="M1721.62 118.9 V300.7" stroke="#ececec" stroke-width="0.9"/><path d="M1736.50 118.9 V300.7" stroke="#ececec" stroke-width="0.9"/><path d="M1207.9 277.97 H1743.7" stroke="#ececec" stroke-width="0.9"/><path d="M1207.9 255.25 H1743.7" stroke="#ececec" stroke-width="0.9"/><path d="M1207.9 232.52 H1743.7" stroke="#ececec" stroke-width="0.9"/><path d="M1207.9 209.80 H1743.7" stroke="#ececec" stroke-width="0.9"/><path d="M1207.9 187.07 H1743.7" stroke="#ececec" stroke-width="0.9"/><path d="M1207.9 164.35 H1743.7" stroke="#ececec" stroke-width="0.9"/><path d="M1207.9 141.62 H1743.7" stroke="#ececec" stroke-width="0.9"/><rect x="1209.70" y="277.97" width="12.0" height="22.72" fill="#2aa89b"/><rect x="1239.46" y="289.34" width="12.0" height="11.36" fill="url(#hm)"/><rect x="1269.22" y="289.34" width="12.0" height="11.36" fill="#8f1f50"/><rect x="1298.98" y="289.34" width="12.0" height="11.36" fill="#8f1f50"/><rect x="1328.74" y="289.34" width="12.0" height="11.36" fill="#2aa89b"/><rect x="1328.74" y="277.97" width="12.0" height="11.36" fill="#2d5236"/><rect x="1328.74" y="266.61" width="12.0" height="11.36" fill="#8f1f50"/><rect x="1343.62" y="289.34" width="12.0" height="11.36" fill="#2d5236"/><rect x="1343.62" y="277.97" width="12.0" height="11.36" fill="#8f1f50"/><rect x="1358.50" y="289.34" width="12.0" height="11.36" fill="#2d5236"/><rect x="1358.50" y="277.97" width="12.0" height="11.36" fill="#8f1f50"/><rect x="1373.38" y="289.34" width="12.0" height="11.36" fill="#2d5236"/><rect x="1388.26" y="289.34" width="12.0" height="11.36" fill="#2aa89b"/><rect x="1388.26" y="266.61" width="12.0" height="22.72" fill="#2d5236"/><rect x="1403.14" y="289.34" width="12.0" height="11.36" fill="#2aa89b"/><rect x="1403.14" y="277.97" width="12.0" height="11.36" fill="#2d5236"/><rect x="1403.14" y="266.61" width="12.0" height="11.36" fill="#8f1f50"/><rect x="1418.02" y="289.34" width="12.0" height="11.36" fill="#8f1f50"/><rect x="1432.90" y="289.34" width="12.0" height="11.36" fill="#2aa89b"/><rect x="1462.66" y="289.34" width="12.0" height="11.36" fill="#8f1f50"/><rect x="1477.54" y="289.34" width="12.0" height="11.36" fill="#2aa89b"/><rect x="1492.42" y="243.89" width="12.0" height="56.81" fill="#2d5236"/><rect x="1492.42" y="232.52" width="12.0" height="11.36" fill="#8f1f50"/><rect x="1522.18" y="232.52" width="12.0" height="68.17" fill="#2d5236"/><rect x="1522.18" y="209.80" width="12.0" height="22.72" fill="#e3c97d"/><rect x="1522.18" y="198.44" width="12.0" height="11.36" fill="#8f1f50"/><rect x="1551.94" y="289.34" width="12.0" height="11.36" fill="#2aa89b"/><rect x="1551.94" y="266.61" width="12.0" height="22.72" fill="#2d5236"/><rect x="1551.94" y="243.89" width="12.0" height="22.72" fill="#e3c97d"/><rect x="1551.94" y="232.52" width="12.0" height="11.36" fill="#8f1f50"/><rect x="1566.82" y="289.34" width="12.0" height="11.36" fill="#2d5236"/><rect x="1581.70" y="277.97" width="12.0" height="22.72" fill="#2aa89b"/><rect x="1581.70" y="266.61" width="12.0" height="11.36" fill="#2d5236"/><rect x="1581.70" y="255.25" width="12.0" height="11.36" fill="url(#hg)"/><rect x="1596.58" y="243.89" width="12.0" height="56.81" fill="#2d5236"/><rect x="1596.58" y="232.52" width="12.0" height="11.36" fill="#8f1f50"/><rect x="1611.46" y="289.34" width="12.0" height="11.36" fill="#8f1f50"/><rect x="1626.34" y="221.16" width="12.0" height="79.54" fill="#2d5236"/><rect x="1641.22" y="175.71" width="12.0" height="124.99" fill="#2d5236"/><rect x="1641.22" y="130.26" width="12.0" height="45.45" fill="#8f1f50"/><rect x="1656.10" y="289.34" width="12.0" height="11.36" fill="#2aa89b"/><rect x="1656.10" y="277.97" width="12.0" height="11.36" fill="#2d5236"/><rect x="1656.10" y="255.25" width="12.0" height="22.72" fill="#8f1f50"/><rect x="1670.98" y="289.34" width="12.0" height="11.36" fill="#2aa89b"/><rect x="1670.98" y="266.61" width="12.0" height="22.72" fill="#8f1f50"/><rect x="1685.86" y="277.97" width="12.0" height="22.72" fill="#2d5236"/><rect x="1685.86" y="266.61" width="12.0" height="11.36" fill="#8f1f50"/><rect x="1700.74" y="289.34" width="12.0" height="11.36" fill="#2aa89b"/><rect x="1700.74" y="266.61" width="12.0" height="22.72" fill="#8f1f50"/><rect x="1207.9" y="118.9" width="535.8" height="181.79999999999998" fill="none" stroke="#505050" stroke-width="1.3"/><path d="M1207.9 300.7 H1743.7" stroke="#3c3c3c" stroke-width="1.6"/><path d="M1204.3000000000002 300.70 H1207.9" stroke="#444" stroke-width="1"/><path d="M1204.3000000000002 277.97 H1207.9" stroke="#444" stroke-width="1"/><path d="M1204.3000000000002 255.25 H1207.9" stroke="#444" stroke-width="1"/><path d="M1204.3000000000002 232.52 H1207.9" stroke="#444" stroke-width="1"/><path d="M1204.3000000000002 209.80 H1207.9" stroke="#444" stroke-width="1"/><path d="M1204.3000000000002 187.07 H1207.9" stroke="#444" stroke-width="1"/><path d="M1204.3000000000002 164.35 H1207.9" stroke="#444" stroke-width="1"/><path d="M1204.3000000000002 141.62 H1207.9" stroke="#444" stroke-width="1"/><path d="M1204.3000000000002 118.90 H1207.9" stroke="#444" stroke-width="1"/><path d="M1215.70 300.7 V304.09999999999997" stroke="#444" stroke-width="1"/><path d="M1230.58 300.7 V304.09999999999997" stroke="#444" stroke-width="1"/><path d="M1245.46 300.7 V304.09999999999997" stroke="#444" stroke-width="1"/><path d="M1260.34 300.7 V304.09999999999997" stroke="#444" stroke-width="1"/><path d="M1275.22 300.7 V304.09999999999997" stroke="#444" stroke-width="1"/><path d="M1290.10 300.7 V304.09999999999997" stroke="#444" stroke-width="1"/><path d="M1304.98 300.7 V304.09999999999997" stroke="#444" stroke-width="1"/><path d="M1319.86 300.7 V304.09999999999997" stroke="#444" stroke-width="1"/><path d="M1334.74 300.7 V304.09999999999997" stroke="#444" stroke-width="1"/><path d="M1349.62 300.7 V304.09999999999997" stroke="#444" stroke-width="1"/><path d="M1364.50 300.7 V304.09999999999997" stroke="#444" stroke-width="1"/><path d="M1379.38 300.7 V304.09999999999997" stroke="#444" stroke-width="1"/><path d="M1394.26 300.7 V304.09999999999997" stroke="#444" stroke-width="1"/><path d="M1409.14 300.7 V304.09999999999997" stroke="#444" stroke-width="1"/><path d="M1424.02 300.7 V304.09999999999997" stroke="#444" stroke-width="1"/><path d="M1438.90 300.7 V304.09999999999997" stroke="#444" stroke-width="1"/><path d="M1453.78 300.7 V304.09999999999997" stroke="#444" stroke-width="1"/><path d="M1468.66 300.7 V304.09999999999997" stroke="#444" stroke-width="1"/><path d="M1483.54 300.7 V304.09999999999997" stroke="#444" stroke-width="1"/><path d="M1498.42 300.7 V304.09999999999997" stroke="#444" stroke-width="1"/><path d="M1513.30 300.7 V304.09999999999997" stroke="#444" stroke-width="1"/><path d="M1528.18 300.7 V304.09999999999997" stroke="#444" stroke-width="1"/><path d="M1543.06 300.7 V304.09999999999997" stroke="#444" stroke-width="1"/><path d="M1557.94 300.7 V304.09999999999997" stroke="#444" stroke-width="1"/><path d="M1572.82 300.7 V304.09999999999997" stroke="#444" stroke-width="1"/><path d="M1587.70 300.7 V304.09999999999997" stroke="#444" stroke-width="1"/><path d="M1602.58 300.7 V304.09999999999997" stroke="#444" stroke-width="1"/><path d="M1617.46 300.7 V304.09999999999997" stroke="#444" stroke-width="1"/><path d="M1632.34 300.7 V304.09999999999997" stroke="#444" stroke-width="1"/><path d="M1647.22 300.7 V304.09999999999997" stroke="#444" stroke-width="1"/><path d="M1662.10 300.7 V304.09999999999997" stroke="#444" stroke-width="1"/><path d="M1676.98 300.7 V304.09999999999997" stroke="#444" stroke-width="1"/><path d="M1691.86 300.7 V304.09999999999997" stroke="#444" stroke-width="1"/><path d="M1706.74 300.7 V304.09999999999997" stroke="#444" stroke-width="1"/><path d="M1721.62 300.7 V304.09999999999997" stroke="#444" stroke-width="1"/><path d="M1736.50 300.7 V304.09999999999997" stroke="#444" stroke-width="1"/><rect x="1763" y="176.20" width="7.2" height="7.2" fill="#2aa89b"/><rect x="1763" y="194.05" width="7.2" height="7.2" fill="#2d5236"/><rect x="1763" y="211.90" width="7.2" height="7.2" fill="#e3c97d"/><rect x="1763" y="229.75" width="7.2" height="7.2" fill="#8f1f50"/><rect x="1763" y="247.60" width="7.2" height="7.2" fill="url(#hl)"/><rect x="1887.6" y="103.8" width="9" height="9.2" rx="1" fill="#5f6d8e"/><rect x="1889.2" y="106" width="5.8" height="5.6" fill="#e6e9f0"/><rect x="1889.8" y="108.4" width="1.1" height="3.2" fill="#5f6d8e"/><rect x="1891.6" y="106.8" width="1.1" height="4.8" fill="#5f6d8e"/><rect x="1893.4" y="107.8" width="1.1" height="3.8" fill="#5f6d8e"/></svg>
<span class="t" style="left:1198.01px;top:298px;font-size:8.0px;color:#555;transform:scaleX(1.1000);">0</span>
<span class="t" style="left:1198.01px;top:275px;font-size:8.0px;color:#555;transform:scaleX(1.1000);">2</span>
<span class="t" style="left:1198.01px;top:253px;font-size:8.0px;color:#555;transform:scaleX(1.1000);">4</span>
<span class="t" style="left:1198.01px;top:230px;font-size:8.0px;color:#555;transform:scaleX(1.1000);">6</span>
<span class="t" style="left:1198.01px;top:207px;font-size:8.0px;color:#555;transform:scaleX(1.1000);">8</span>
<span class="t" style="left:1193.11px;top:184px;font-size:8.0px;color:#555;transform:scaleX(1.1000);">10</span>
<span class="t" style="left:1193.11px;top:162px;font-size:8.0px;color:#555;transform:scaleX(1.1000);">12</span>
<span class="t" style="left:1193.11px;top:139px;font-size:8.0px;color:#555;transform:scaleX(1.1000);">14</span>
<span class="t" style="left:1193.11px;top:116px;font-size:8.0px;color:#555;transform:scaleX(1.1000);">16</span>
<span class="t" style="left:1211.75px;top:351.80px;font-size:8.5px;color:#555;transform-origin:0 0;transform:rotate(-90deg) scaleX(0.9958);">2021-03-01</span>
<span class="t" style="left:1226.63px;top:351.80px;font-size:8.5px;color:#555;transform-origin:0 0;transform:rotate(-90deg) scaleX(0.9958);">2021-03-08</span>
<span class="t" style="left:1241.51px;top:351.80px;font-size:8.5px;color:#555;transform-origin:0 0;transform:rotate(-90deg) scaleX(0.9958);">2021-03-15</span>
<span class="t" style="left:1256.39px;top:351.80px;font-size:8.5px;color:#555;transform-origin:0 0;transform:rotate(-90deg) scaleX(0.9958);">2021-03-22</span>
<span class="t" style="left:1271.27px;top:351.80px;font-size:8.5px;color:#555;transform-origin:0 0;transform:rotate(-90deg) scaleX(0.9958);">2021-03-29</span>
<span class="t" style="left:1286.15px;top:351.80px;font-size:8.5px;color:#555;transform-origin:0 0;transform:rotate(-90deg) scaleX(0.9958);">2021-04-05</span>
<span class="t" style="left:1301.03px;top:351.80px;font-size:8.5px;color:#555;transform-origin:0 0;transform:rotate(-90deg) scaleX(0.9958);">2021-04-12</span>
<span class="t" style="left:1315.91px;top:351.80px;font-size:8.5px;color:#555;transform-origin:0 0;transform:rotate(-90deg) scaleX(0.9958);">2021-04-19</span>
<span class="t" style="left:1330.79px;top:351.80px;font-size:8.5px;color:#555;transform-origin:0 0;transform:rotate(-90deg) scaleX(0.9958);">2021-04-26</span>
<span class="t" style="left:1345.67px;top:351.80px;font-size:8.5px;color:#555;transform-origin:0 0;transform:rotate(-90deg) scaleX(0.9958);">2021-05-03</span>
<span class="t" style="left:1360.55px;top:351.80px;font-size:8.5px;color:#555;transform-origin:0 0;transform:rotate(-90deg) scaleX(0.9958);">2021-05-10</span>
<span class="t" style="left:1375.43px;top:351.80px;font-size:8.5px;color:#555;transform-origin:0 0;transform:rotate(-90deg) scaleX(0.9958);">2021-05-17</span>
<span class="t" style="left:1390.31px;top:351.80px;font-size:8.5px;color:#555;transform-origin:0 0;transform:rotate(-90deg) scaleX(0.9958);">2021-05-24</span>
<span class="t" style="left:1405.19px;top:351.80px;font-size:8.5px;color:#555;transform-origin:0 0;transform:rotate(-90deg) scaleX(0.9958);">2021-05-31</span>
<span class="t" style="left:1420.07px;top:351.80px;font-size:8.5px;color:#555;transform-origin:0 0;transform:rotate(-90deg) scaleX(0.9958);">2021-06-07</span>
<span class="t" style="left:1434.95px;top:351.80px;font-size:8.5px;color:#555;transform-origin:0 0;transform:rotate(-90deg) scaleX(0.9958);">2021-06-14</span>
<span class="t" style="left:1449.83px;top:351.80px;font-size:8.5px;color:#555;transform-origin:0 0;transform:rotate(-90deg) scaleX(0.9958);">2021-06-21</span>
<span class="t" style="left:1464.71px;top:351.80px;font-size:8.5px;color:#555;transform-origin:0 0;transform:rotate(-90deg) scaleX(0.9958);">2021-06-28</span>
<span class="t" style="left:1479.59px;top:351.80px;font-size:8.5px;color:#555;transform-origin:0 0;transform:rotate(-90deg) scaleX(0.9958);">2021-07-05</span>
<span class="t" style="left:1494.47px;top:351.80px;font-size:8.5px;color:#555;transform-origin:0 0;transform:rotate(-90deg) scaleX(0.9958);">2021-07-12</span>
<span class="t" style="left:1509.35px;top:351.80px;font-size:8.5px;color:#555;transform-origin:0 0;transform:rotate(-90deg) scaleX(0.9958);">2021-07-19</span>
<span class="t" style="left:1524.23px;top:351.80px;font-size:8.5px;color:#555;transform-origin:0 0;transform:rotate(-90deg) scaleX(0.9958);">2021-07-26</span>
<span class="t" style="left:1539.11px;top:351.80px;font-size:8.5px;color:#555;transform-origin:0 0;transform:rotate(-90deg) scaleX(0.9958);">2021-08-02</span>
<span class="t" style="left:1553.99px;top:351.80px;font-size:8.5px;color:#555;transform-origin:0 0;transform:rotate(-90deg) scaleX(0.9958);">2021-08-09</span>
<span class="t" style="left:1568.87px;top:351.80px;font-size:8.5px;color:#555;transform-origin:0 0;transform:rotate(-90deg) scaleX(0.9958);">2021-08-16</span>
<span class="t" style="left:1583.75px;top:351.80px;font-size:8.5px;color:#555;transform-origin:0 0;transform:rotate(-90deg) scaleX(0.9958);">2021-08-23</span>
<span class="t" style="left:1598.63px;top:351.80px;font-size:8.5px;color:#555;transform-origin:0 0;transform:rotate(-90deg) scaleX(0.9958);">2021-08-30</span>
<span class="t" style="left:1613.51px;top:351.80px;font-size:8.5px;color:#555;transform-origin:0 0;transform:rotate(-90deg) scaleX(0.9958);">2021-09-06</span>
<span class="t" style="left:1628.39px;top:351.80px;font-size:8.5px;color:#555;transform-origin:0 0;transform:rotate(-90deg) scaleX(0.9958);">2021-09-13</span>
<span class="t" style="left:1643.27px;top:351.80px;font-size:8.5px;color:#555;transform-origin:0 0;transform:rotate(-90deg) scaleX(0.9958);">2021-09-20</span>
<span class="t" style="left:1658.15px;top:351.80px;font-size:8.5px;color:#555;transform-origin:0 0;transform:rotate(-90deg) scaleX(0.9958);">2021-09-27</span>
<span class="t" style="left:1673.03px;top:351.80px;font-size:8.5px;color:#555;transform-origin:0 0;transform:rotate(-90deg) scaleX(0.9958);">2021-10-04</span>
<span class="t" style="left:1687.91px;top:351.80px;font-size:8.5px;color:#555;transform-origin:0 0;transform:rotate(-90deg) scaleX(1.0105);">2021-10-11</span>
<span class="t" style="left:1702.79px;top:351.80px;font-size:8.5px;color:#555;transform-origin:0 0;transform:rotate(-90deg) scaleX(0.9958);">2021-10-18</span>
<span class="t" style="left:1717.67px;top:351.80px;font-size:8.5px;color:#555;transform-origin:0 0;transform:rotate(-90deg) scaleX(0.9958);">2021-10-25</span>
<span class="t" style="left:1732.55px;top:351.80px;font-size:8.5px;color:#555;transform-origin:0 0;transform:rotate(-90deg) scaleX(1.0105);">2021-11-01</span>
<span class="t" style="left:1459.20px;top:357px;font-size:11.2px;color:#333;transform:scaleX(1.1633);font-weight:700;">Week</span>
<span class="t" style="left:1177.73px;top:238.40px;font-size:11.2px;color:#333;transform-origin:0 0;transform:rotate(-90deg) scaleX(1.1534);font-weight:700;">Fatalities</span>
<span class="t" style="left:1778.80px;top:177px;font-size:8.0px;color:#555;transform:scaleX(1.0784);">Large Bird (Total = 13)</span>
<span class="t" style="left:1778.80px;top:194px;font-size:8.0px;color:#555;transform:scaleX(1.0818);">Migratory Bat (Total = 49)</span>
<span class="t" style="left:1778.80px;top:212px;font-size:8.0px;color:#555;transform:scaleX(1.0765);">Non-Migratory Bat (Total = 4)</span>
<span class="t" style="left:1778.80px;top:230px;font-size:8.0px;color:#555;transform:scaleX(1.0846);">Small Bird (Total = 25)</span>
<span class="t" style="left:1778.80px;top:248px;font-size:8.0px;color:#555;transform:scaleX(1.0658);">Incidental</span>
</body></html>
